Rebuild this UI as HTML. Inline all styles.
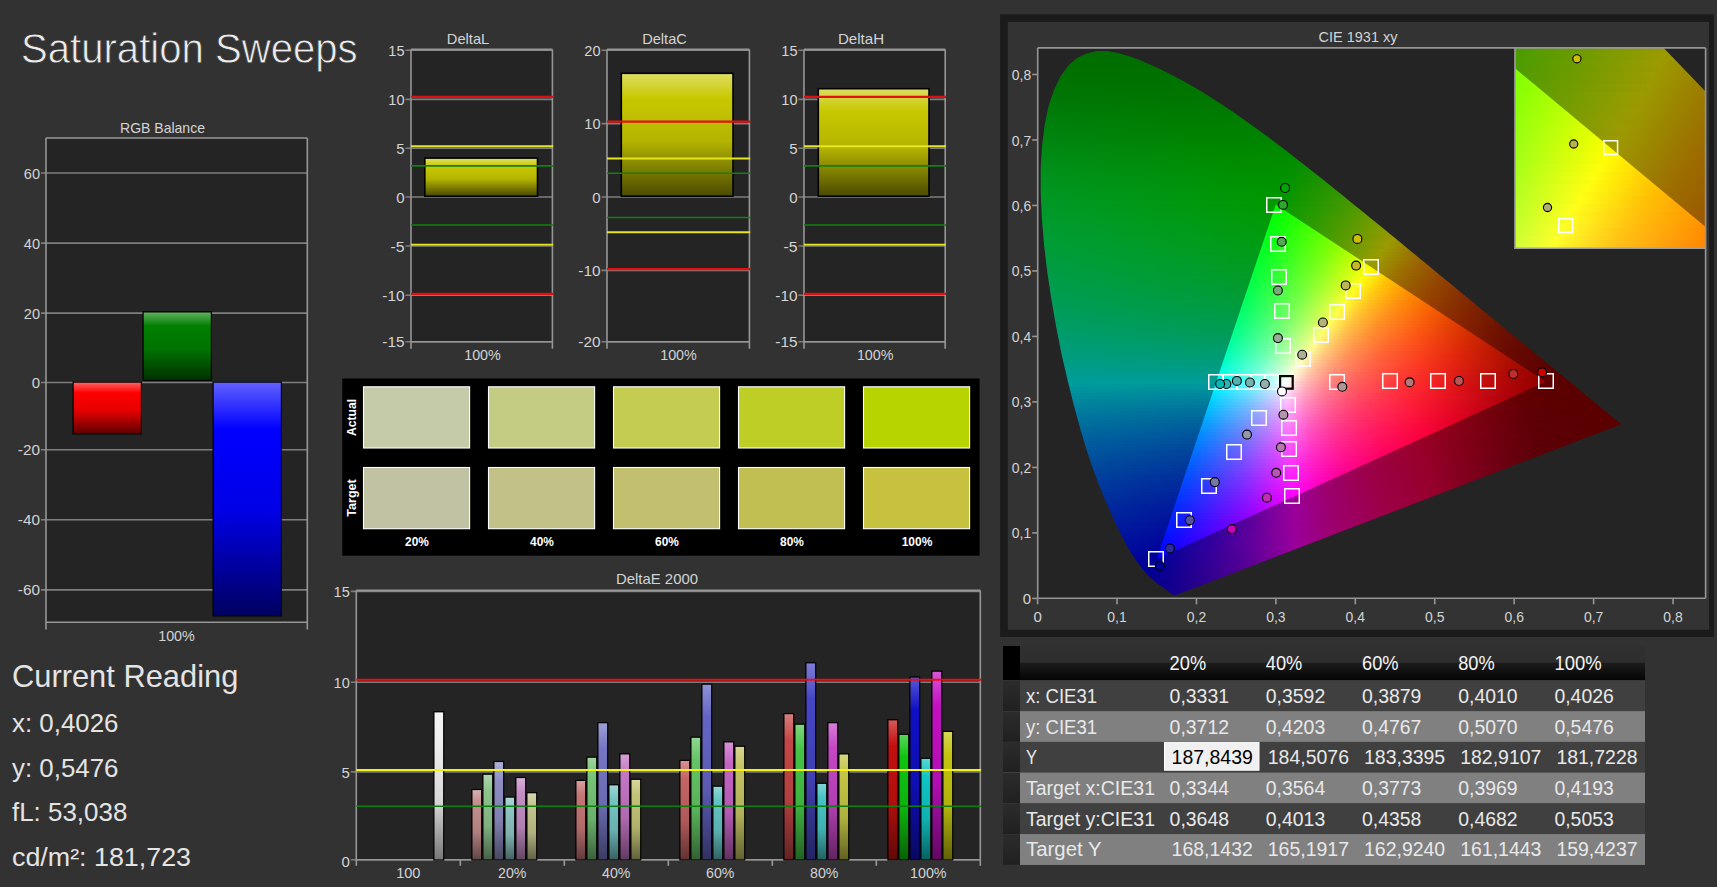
<!DOCTYPE html>
<html><head><meta charset="utf-8"><title>Saturation Sweeps</title>
<style>
html,body{margin:0;padding:0;background:#323232;width:1717px;height:887px;overflow:hidden}
svg{position:absolute;left:0;top:0}
text{font-family:"Liberation Sans", sans-serif}
.f{position:absolute}
.f>i{display:block;height:3px}
.g4>i{height:4px}
</style></head>
<body>
<svg width="1717" height="887" viewBox="0 0 1717 887">
<defs><linearGradient id="g1" x1="0" y1="0" x2="0" y2="1"><stop offset="0" stop-color="#ff6161"/><stop offset="0.2" stop-color="#ff0000"/><stop offset="0.55" stop-color="#e60000"/><stop offset="1" stop-color="#610000"/></linearGradient><linearGradient id="g2" x1="0" y1="0" x2="0" y2="1"><stop offset="0" stop-color="#61b061"/><stop offset="0.2" stop-color="#008000"/><stop offset="0.55" stop-color="#007300"/><stop offset="1" stop-color="#003100"/></linearGradient><linearGradient id="g3" x1="0" y1="0" x2="0" y2="1"><stop offset="0" stop-color="#6161ff"/><stop offset="0.2" stop-color="#0000ff"/><stop offset="0.55" stop-color="#0000e6"/><stop offset="1" stop-color="#000061"/></linearGradient><linearGradient id="g4" x1="0" y1="0" x2="0" y2="1"><stop offset="0" stop-color="#dddd61"/><stop offset="0.2" stop-color="#c8c800"/><stop offset="0.55" stop-color="#b4b400"/><stop offset="1" stop-color="#4c4c00"/></linearGradient><linearGradient id="g5" x1="0" y1="0" x2="0" y2="1"><stop offset="0" stop-color="#dddd61"/><stop offset="0.2" stop-color="#c8c800"/><stop offset="0.55" stop-color="#b4b400"/><stop offset="1" stop-color="#4c4c00"/></linearGradient><linearGradient id="g6" x1="0" y1="0" x2="0" y2="1"><stop offset="0" stop-color="#dddd61"/><stop offset="0.2" stop-color="#c8c800"/><stop offset="0.55" stop-color="#b4b400"/><stop offset="1" stop-color="#4c4c00"/></linearGradient><linearGradient id="g7" x1="0" y1="0" x2="0" y2="1"><stop offset="0" stop-color="#f4f4f4"/><stop offset="0.18" stop-color="#f0f0f0"/><stop offset="0.6" stop-color="#d8d8d8"/><stop offset="1" stop-color="#787878"/></linearGradient><linearGradient id="g8" x1="0" y1="0" x2="0" y2="1"><stop offset="0" stop-color="#d6b0b0"/><stop offset="0.18" stop-color="#c48e8e"/><stop offset="0.6" stop-color="#b08080"/><stop offset="1" stop-color="#624747"/></linearGradient><linearGradient id="g9" x1="0" y1="0" x2="0" y2="1"><stop offset="0" stop-color="#b0d6b0"/><stop offset="0.18" stop-color="#8ec48e"/><stop offset="0.6" stop-color="#80b080"/><stop offset="1" stop-color="#476247"/></linearGradient><linearGradient id="g10" x1="0" y1="0" x2="0" y2="1"><stop offset="0" stop-color="#b0b0d6"/><stop offset="0.18" stop-color="#8e8ec4"/><stop offset="0.6" stop-color="#8080b0"/><stop offset="1" stop-color="#474762"/></linearGradient><linearGradient id="g11" x1="0" y1="0" x2="0" y2="1"><stop offset="0" stop-color="#b0d6d6"/><stop offset="0.18" stop-color="#8ec4c4"/><stop offset="0.6" stop-color="#80b0b0"/><stop offset="1" stop-color="#476262"/></linearGradient><linearGradient id="g12" x1="0" y1="0" x2="0" y2="1"><stop offset="0" stop-color="#d6b0d6"/><stop offset="0.18" stop-color="#c48ec4"/><stop offset="0.6" stop-color="#b080b0"/><stop offset="1" stop-color="#624762"/></linearGradient><linearGradient id="g13" x1="0" y1="0" x2="0" y2="1"><stop offset="0" stop-color="#d6d6b0"/><stop offset="0.18" stop-color="#c4c48e"/><stop offset="0.6" stop-color="#b0b080"/><stop offset="1" stop-color="#626247"/></linearGradient><linearGradient id="g14" x1="0" y1="0" x2="0" y2="1"><stop offset="0" stop-color="#d69f9f"/><stop offset="0.18" stop-color="#c47676"/><stop offset="0.6" stop-color="#b06a6a"/><stop offset="1" stop-color="#623b3b"/></linearGradient><linearGradient id="g15" x1="0" y1="0" x2="0" y2="1"><stop offset="0" stop-color="#9fd69f"/><stop offset="0.18" stop-color="#76c476"/><stop offset="0.6" stop-color="#6ab06a"/><stop offset="1" stop-color="#3b623b"/></linearGradient><linearGradient id="g16" x1="0" y1="0" x2="0" y2="1"><stop offset="0" stop-color="#9f9fd6"/><stop offset="0.18" stop-color="#7676c4"/><stop offset="0.6" stop-color="#6a6ab0"/><stop offset="1" stop-color="#3b3b62"/></linearGradient><linearGradient id="g17" x1="0" y1="0" x2="0" y2="1"><stop offset="0" stop-color="#9fd6d6"/><stop offset="0.18" stop-color="#76c4c4"/><stop offset="0.6" stop-color="#6ab0b0"/><stop offset="1" stop-color="#3b6262"/></linearGradient><linearGradient id="g18" x1="0" y1="0" x2="0" y2="1"><stop offset="0" stop-color="#d69fd6"/><stop offset="0.18" stop-color="#c476c4"/><stop offset="0.6" stop-color="#b06ab0"/><stop offset="1" stop-color="#623b62"/></linearGradient><linearGradient id="g19" x1="0" y1="0" x2="0" y2="1"><stop offset="0" stop-color="#d6d69f"/><stop offset="0.18" stop-color="#c4c476"/><stop offset="0.6" stop-color="#b0b06a"/><stop offset="1" stop-color="#62623b"/></linearGradient><linearGradient id="g20" x1="0" y1="0" x2="0" y2="1"><stop offset="0" stop-color="#d69292"/><stop offset="0.18" stop-color="#c46464"/><stop offset="0.6" stop-color="#b05a5a"/><stop offset="1" stop-color="#623232"/></linearGradient><linearGradient id="g21" x1="0" y1="0" x2="0" y2="1"><stop offset="0" stop-color="#92d692"/><stop offset="0.18" stop-color="#64c464"/><stop offset="0.6" stop-color="#5ab05a"/><stop offset="1" stop-color="#326232"/></linearGradient><linearGradient id="g22" x1="0" y1="0" x2="0" y2="1"><stop offset="0" stop-color="#9292d6"/><stop offset="0.18" stop-color="#6464c4"/><stop offset="0.6" stop-color="#5a5ab0"/><stop offset="1" stop-color="#323262"/></linearGradient><linearGradient id="g23" x1="0" y1="0" x2="0" y2="1"><stop offset="0" stop-color="#92d6d6"/><stop offset="0.18" stop-color="#64c4c4"/><stop offset="0.6" stop-color="#5ab0b0"/><stop offset="1" stop-color="#326262"/></linearGradient><linearGradient id="g24" x1="0" y1="0" x2="0" y2="1"><stop offset="0" stop-color="#d692d6"/><stop offset="0.18" stop-color="#c464c4"/><stop offset="0.6" stop-color="#b05ab0"/><stop offset="1" stop-color="#623262"/></linearGradient><linearGradient id="g25" x1="0" y1="0" x2="0" y2="1"><stop offset="0" stop-color="#d6d692"/><stop offset="0.18" stop-color="#c4c464"/><stop offset="0.6" stop-color="#b0b05a"/><stop offset="1" stop-color="#626232"/></linearGradient><linearGradient id="g26" x1="0" y1="0" x2="0" y2="1"><stop offset="0" stop-color="#d67e7e"/><stop offset="0.18" stop-color="#c44646"/><stop offset="0.6" stop-color="#b03f3f"/><stop offset="1" stop-color="#622323"/></linearGradient><linearGradient id="g27" x1="0" y1="0" x2="0" y2="1"><stop offset="0" stop-color="#7ed67e"/><stop offset="0.18" stop-color="#46c446"/><stop offset="0.6" stop-color="#3fb03f"/><stop offset="1" stop-color="#236223"/></linearGradient><linearGradient id="g28" x1="0" y1="0" x2="0" y2="1"><stop offset="0" stop-color="#7e7ed6"/><stop offset="0.18" stop-color="#4646c4"/><stop offset="0.6" stop-color="#3f3fb0"/><stop offset="1" stop-color="#232362"/></linearGradient><linearGradient id="g29" x1="0" y1="0" x2="0" y2="1"><stop offset="0" stop-color="#7ed6d6"/><stop offset="0.18" stop-color="#46c4c4"/><stop offset="0.6" stop-color="#3fb0b0"/><stop offset="1" stop-color="#236262"/></linearGradient><linearGradient id="g30" x1="0" y1="0" x2="0" y2="1"><stop offset="0" stop-color="#d67ed6"/><stop offset="0.18" stop-color="#c446c4"/><stop offset="0.6" stop-color="#b03fb0"/><stop offset="1" stop-color="#622362"/></linearGradient><linearGradient id="g31" x1="0" y1="0" x2="0" y2="1"><stop offset="0" stop-color="#d6d67e"/><stop offset="0.18" stop-color="#c4c446"/><stop offset="0.6" stop-color="#b0b03f"/><stop offset="1" stop-color="#626223"/></linearGradient><linearGradient id="g32" x1="0" y1="0" x2="0" y2="1"><stop offset="0" stop-color="#d65757"/><stop offset="0.18" stop-color="#c40f0f"/><stop offset="0.6" stop-color="#b00e0e"/><stop offset="1" stop-color="#620808"/></linearGradient><linearGradient id="g33" x1="0" y1="0" x2="0" y2="1"><stop offset="0" stop-color="#57d657"/><stop offset="0.18" stop-color="#0fc40f"/><stop offset="0.6" stop-color="#0eb00e"/><stop offset="1" stop-color="#086208"/></linearGradient><linearGradient id="g34" x1="0" y1="0" x2="0" y2="1"><stop offset="0" stop-color="#5757d6"/><stop offset="0.18" stop-color="#0f0fc4"/><stop offset="0.6" stop-color="#0e0eb0"/><stop offset="1" stop-color="#080862"/></linearGradient><linearGradient id="g35" x1="0" y1="0" x2="0" y2="1"><stop offset="0" stop-color="#57d6d6"/><stop offset="0.18" stop-color="#0fc4c4"/><stop offset="0.6" stop-color="#0eb0b0"/><stop offset="1" stop-color="#086262"/></linearGradient><linearGradient id="g36" x1="0" y1="0" x2="0" y2="1"><stop offset="0" stop-color="#d657d6"/><stop offset="0.18" stop-color="#c40fc4"/><stop offset="0.6" stop-color="#b00eb0"/><stop offset="1" stop-color="#620862"/></linearGradient><linearGradient id="g37" x1="0" y1="0" x2="0" y2="1"><stop offset="0" stop-color="#d6d657"/><stop offset="0.18" stop-color="#c4c40f"/><stop offset="0.6" stop-color="#b0b00e"/><stop offset="1" stop-color="#626208"/></linearGradient><linearGradient id="g38" x1="0" y1="0" x2="0" y2="1"><stop offset="0" stop-color="#303030"/><stop offset="0.48" stop-color="#2e2e2e"/><stop offset="0.5" stop-color="#1c1c1c"/><stop offset="1" stop-color="#050505"/></linearGradient><linearGradient id="g39" x1="0" y1="0" x2="0" y2="1"><stop offset="0" stop-color="#2c2c2c"/><stop offset="1" stop-color="#202020"/></linearGradient><linearGradient id="g40" x1="0" y1="0" x2="0" y2="1"><stop offset="0" stop-color="#2c2c2c"/><stop offset="1" stop-color="#202020"/></linearGradient><linearGradient id="g41" x1="0" y1="0" x2="0" y2="1"><stop offset="0" stop-color="#2c2c2c"/><stop offset="1" stop-color="#202020"/></linearGradient><linearGradient id="g42" x1="0" y1="0" x2="0" y2="1"><stop offset="0" stop-color="#2c2c2c"/><stop offset="1" stop-color="#202020"/></linearGradient><linearGradient id="g43" x1="0" y1="0" x2="0" y2="1"><stop offset="0" stop-color="#2c2c2c"/><stop offset="1" stop-color="#202020"/></linearGradient><linearGradient id="g44" x1="0" y1="0" x2="0" y2="1"><stop offset="0" stop-color="#2c2c2c"/><stop offset="1" stop-color="#202020"/></linearGradient></defs>
<text x="21.0" y="63.2" font-size="43.4" fill="#ececec" textLength="336.6" lengthAdjust="spacingAndGlyphs" stroke="#323232" stroke-width="0.8">Saturation Sweeps</text>
<text x="12.0" y="687.0" font-size="30.5" fill="#e4e4e4" textLength="226.3" lengthAdjust="spacingAndGlyphs">Current Reading</text>
<text x="12.0" y="732.4" font-size="25.5" fill="#e4e4e4" textLength="106.5" lengthAdjust="spacingAndGlyphs">x: 0,4026</text>
<text x="12.0" y="776.9" font-size="25.5" fill="#e4e4e4" textLength="106.5" lengthAdjust="spacingAndGlyphs">y: 0,5476</text>
<text x="12.0" y="821.4" font-size="25.5" fill="#e4e4e4" textLength="115.3" lengthAdjust="spacingAndGlyphs">fL: 53,038</text>
<text x="12.0" y="865.9" font-size="25.5" fill="#e4e4e4" textLength="179.0" lengthAdjust="spacingAndGlyphs">cd/m²: 181,723</text>
<rect x="46.00" y="138.00" width="261.30" height="484.20" fill="#242424"/>
<line x1="41.00" y1="173.00" x2="307.30" y2="173.00" stroke="#7e7e7e" stroke-width="1.6"/>
<text x="40.0" y="178.5" font-size="15" text-anchor="end" fill="#d4d4d4" textLength="16.2" lengthAdjust="spacingAndGlyphs">60</text>
<line x1="41.00" y1="243.10" x2="307.30" y2="243.10" stroke="#7e7e7e" stroke-width="1.6"/>
<text x="40.0" y="248.6" font-size="15" text-anchor="end" fill="#d4d4d4" textLength="16.2" lengthAdjust="spacingAndGlyphs">40</text>
<line x1="41.00" y1="313.10" x2="307.30" y2="313.10" stroke="#7e7e7e" stroke-width="1.6"/>
<text x="40.0" y="318.6" font-size="15" text-anchor="end" fill="#d4d4d4" textLength="16.2" lengthAdjust="spacingAndGlyphs">20</text>
<line x1="41.00" y1="382.50" x2="307.30" y2="382.50" stroke="#7e7e7e" stroke-width="1.6"/>
<text x="40.0" y="388.0" font-size="15" text-anchor="end" fill="#d4d4d4">0</text>
<line x1="41.00" y1="449.80" x2="307.30" y2="449.80" stroke="#7e7e7e" stroke-width="1.6"/>
<text x="40.0" y="455.3" font-size="15" text-anchor="end" fill="#d4d4d4" textLength="22.2" lengthAdjust="spacingAndGlyphs">-20</text>
<line x1="41.00" y1="519.80" x2="307.30" y2="519.80" stroke="#7e7e7e" stroke-width="1.6"/>
<text x="40.0" y="525.3" font-size="15" text-anchor="end" fill="#d4d4d4" textLength="22.2" lengthAdjust="spacingAndGlyphs">-40</text>
<line x1="41.00" y1="589.90" x2="307.30" y2="589.90" stroke="#7e7e7e" stroke-width="1.6"/>
<text x="40.0" y="595.4" font-size="15" text-anchor="end" fill="#d4d4d4" textLength="22.2" lengthAdjust="spacingAndGlyphs">-60</text>
<line x1="46.00" y1="138.00" x2="307.30" y2="138.00" stroke="#969696" stroke-width="1.6"/>
<line x1="46.00" y1="138.00" x2="46.00" y2="629.60" stroke="#969696" stroke-width="1.6"/>
<line x1="307.30" y1="138.00" x2="307.30" y2="629.60" stroke="#969696" stroke-width="1.6"/>
<line x1="46.00" y1="622.20" x2="307.30" y2="622.20" stroke="#969696" stroke-width="1.6"/>
<text x="162.5" y="132.5" font-size="15" text-anchor="middle" fill="#d4d4d4" textLength="85.0" lengthAdjust="spacingAndGlyphs">RGB Balance</text>
<text x="176.5" y="641.0" font-size="15" text-anchor="middle" fill="#d4d4d4" textLength="36.6" lengthAdjust="spacingAndGlyphs">100%</text>
<rect x="72.50" y="381.50" width="69.50" height="53.00" fill="#000"/>
<rect x="73.70" y="382.70" width="67.10" height="50.60" fill="url(#g1)"/>
<rect x="142.50" y="311.30" width="69.50" height="69.70" fill="#000"/>
<rect x="143.70" y="312.50" width="67.10" height="67.30" fill="url(#g2)"/>
<rect x="212.50" y="381.50" width="69.50" height="235.00" fill="#000"/>
<rect x="213.70" y="382.70" width="67.10" height="232.60" fill="url(#g3)"/>
<rect x="411.00" y="49.50" width="141.40" height="292.30" fill="#242424"/>
<line x1="405.50" y1="50.20" x2="552.40" y2="50.20" stroke="#7e7e7e" stroke-width="1.6"/>
<text x="404.5" y="55.7" font-size="15" text-anchor="end" fill="#d4d4d4" textLength="16.2" lengthAdjust="spacingAndGlyphs">15</text>
<line x1="405.50" y1="99.40" x2="552.40" y2="99.40" stroke="#7e7e7e" stroke-width="1.6"/>
<text x="404.5" y="104.9" font-size="15" text-anchor="end" fill="#d4d4d4" textLength="16.2" lengthAdjust="spacingAndGlyphs">10</text>
<line x1="405.50" y1="148.20" x2="552.40" y2="148.20" stroke="#7e7e7e" stroke-width="1.6"/>
<text x="404.5" y="153.7" font-size="15" text-anchor="end" fill="#d4d4d4">5</text>
<line x1="405.50" y1="197.00" x2="552.40" y2="197.00" stroke="#7e7e7e" stroke-width="1.6"/>
<text x="404.5" y="202.5" font-size="15" text-anchor="end" fill="#d4d4d4">0</text>
<line x1="405.50" y1="246.00" x2="552.40" y2="246.00" stroke="#7e7e7e" stroke-width="1.6"/>
<text x="404.5" y="251.5" font-size="15" text-anchor="end" fill="#d4d4d4" textLength="14.1" lengthAdjust="spacingAndGlyphs">-5</text>
<line x1="405.50" y1="295.20" x2="552.40" y2="295.20" stroke="#7e7e7e" stroke-width="1.6"/>
<text x="404.5" y="300.7" font-size="15" text-anchor="end" fill="#d4d4d4" textLength="22.2" lengthAdjust="spacingAndGlyphs">-10</text>
<line x1="405.50" y1="341.80" x2="552.40" y2="341.80" stroke="#7e7e7e" stroke-width="1.6"/>
<text x="404.5" y="347.3" font-size="15" text-anchor="end" fill="#d4d4d4" textLength="22.2" lengthAdjust="spacingAndGlyphs">-15</text>
<line x1="411.00" y1="49.50" x2="552.40" y2="49.50" stroke="#969696" stroke-width="2"/>
<line x1="411.00" y1="49.50" x2="411.00" y2="348.80" stroke="#969696" stroke-width="1.6"/>
<line x1="552.40" y1="49.50" x2="552.40" y2="348.80" stroke="#969696" stroke-width="1.6"/>
<line x1="411.00" y1="341.80" x2="552.40" y2="341.80" stroke="#969696" stroke-width="1.6"/>
<rect x="424.00" y="157.30" width="114.30" height="39.70" fill="#000"/>
<rect x="425.60" y="158.90" width="111.10" height="36.50" fill="url(#g4)"/>
<line x1="411.00" y1="96.95" x2="553.20" y2="96.95" stroke="#e01010" stroke-width="2.3"/>
<line x1="411.00" y1="146.18" x2="553.20" y2="146.18" stroke="#e6e620" stroke-width="1.9"/>
<line x1="411.00" y1="165.87" x2="553.20" y2="165.87" stroke="#108010" stroke-width="1.6"/>
<line x1="411.00" y1="224.94" x2="553.20" y2="224.94" stroke="#108010" stroke-width="1.6"/>
<line x1="411.00" y1="244.62" x2="553.20" y2="244.62" stroke="#e6e620" stroke-width="1.9"/>
<line x1="411.00" y1="293.85" x2="553.20" y2="293.85" stroke="#e01010" stroke-width="2.3"/>
<text x="468.0" y="43.8" font-size="15" text-anchor="middle" fill="#d4d4d4" textLength="42.4" lengthAdjust="spacingAndGlyphs">DeltaL</text>
<text x="482.5" y="360.0" font-size="15" text-anchor="middle" fill="#d4d4d4" textLength="36.6" lengthAdjust="spacingAndGlyphs">100%</text>
<rect x="607.00" y="49.50" width="142.40" height="292.30" fill="#242424"/>
<line x1="601.50" y1="50.20" x2="749.40" y2="50.20" stroke="#7e7e7e" stroke-width="1.6"/>
<text x="600.5" y="55.7" font-size="15" text-anchor="end" fill="#d4d4d4" textLength="16.2" lengthAdjust="spacingAndGlyphs">20</text>
<line x1="601.50" y1="123.60" x2="749.40" y2="123.60" stroke="#7e7e7e" stroke-width="1.6"/>
<text x="600.5" y="129.1" font-size="15" text-anchor="end" fill="#d4d4d4" textLength="16.2" lengthAdjust="spacingAndGlyphs">10</text>
<line x1="601.50" y1="197.00" x2="749.40" y2="197.00" stroke="#7e7e7e" stroke-width="1.6"/>
<text x="600.5" y="202.5" font-size="15" text-anchor="end" fill="#d4d4d4">0</text>
<line x1="601.50" y1="270.40" x2="749.40" y2="270.40" stroke="#7e7e7e" stroke-width="1.6"/>
<text x="600.5" y="275.9" font-size="15" text-anchor="end" fill="#d4d4d4" textLength="22.2" lengthAdjust="spacingAndGlyphs">-10</text>
<line x1="601.50" y1="341.80" x2="749.40" y2="341.80" stroke="#7e7e7e" stroke-width="1.6"/>
<text x="600.5" y="347.3" font-size="15" text-anchor="end" fill="#d4d4d4" textLength="22.2" lengthAdjust="spacingAndGlyphs">-20</text>
<line x1="607.00" y1="49.50" x2="749.40" y2="49.50" stroke="#969696" stroke-width="2"/>
<line x1="607.00" y1="49.50" x2="607.00" y2="348.80" stroke="#969696" stroke-width="1.6"/>
<line x1="749.40" y1="49.50" x2="749.40" y2="348.80" stroke="#969696" stroke-width="1.6"/>
<line x1="607.00" y1="341.80" x2="749.40" y2="341.80" stroke="#969696" stroke-width="1.6"/>
<rect x="620.50" y="72.50" width="113.30" height="124.50" fill="#000"/>
<rect x="622.10" y="74.10" width="110.10" height="121.30" fill="url(#g5)"/>
<line x1="607.00" y1="121.70" x2="750.20" y2="121.70" stroke="#e01010" stroke-width="2.3"/>
<line x1="607.00" y1="158.55" x2="750.20" y2="158.55" stroke="#e6e620" stroke-width="1.9"/>
<line x1="607.00" y1="173.29" x2="750.20" y2="173.29" stroke="#108010" stroke-width="1.6"/>
<line x1="607.00" y1="217.51" x2="750.20" y2="217.51" stroke="#108010" stroke-width="1.6"/>
<line x1="607.00" y1="232.25" x2="750.20" y2="232.25" stroke="#e6e620" stroke-width="1.9"/>
<line x1="607.00" y1="269.10" x2="750.20" y2="269.10" stroke="#e01010" stroke-width="2.3"/>
<text x="664.5" y="43.8" font-size="15" text-anchor="middle" fill="#d4d4d4" textLength="44.6" lengthAdjust="spacingAndGlyphs">DeltaC</text>
<text x="678.5" y="360.0" font-size="15" text-anchor="middle" fill="#d4d4d4" textLength="36.6" lengthAdjust="spacingAndGlyphs">100%</text>
<rect x="804.00" y="49.50" width="141.20" height="292.30" fill="#242424"/>
<line x1="798.50" y1="50.20" x2="945.20" y2="50.20" stroke="#7e7e7e" stroke-width="1.6"/>
<text x="797.5" y="55.7" font-size="15" text-anchor="end" fill="#d4d4d4" textLength="16.2" lengthAdjust="spacingAndGlyphs">15</text>
<line x1="798.50" y1="99.40" x2="945.20" y2="99.40" stroke="#7e7e7e" stroke-width="1.6"/>
<text x="797.5" y="104.9" font-size="15" text-anchor="end" fill="#d4d4d4" textLength="16.2" lengthAdjust="spacingAndGlyphs">10</text>
<line x1="798.50" y1="148.20" x2="945.20" y2="148.20" stroke="#7e7e7e" stroke-width="1.6"/>
<text x="797.5" y="153.7" font-size="15" text-anchor="end" fill="#d4d4d4">5</text>
<line x1="798.50" y1="197.00" x2="945.20" y2="197.00" stroke="#7e7e7e" stroke-width="1.6"/>
<text x="797.5" y="202.5" font-size="15" text-anchor="end" fill="#d4d4d4">0</text>
<line x1="798.50" y1="246.00" x2="945.20" y2="246.00" stroke="#7e7e7e" stroke-width="1.6"/>
<text x="797.5" y="251.5" font-size="15" text-anchor="end" fill="#d4d4d4" textLength="14.1" lengthAdjust="spacingAndGlyphs">-5</text>
<line x1="798.50" y1="295.20" x2="945.20" y2="295.20" stroke="#7e7e7e" stroke-width="1.6"/>
<text x="797.5" y="300.7" font-size="15" text-anchor="end" fill="#d4d4d4" textLength="22.2" lengthAdjust="spacingAndGlyphs">-10</text>
<line x1="798.50" y1="341.80" x2="945.20" y2="341.80" stroke="#7e7e7e" stroke-width="1.6"/>
<text x="797.5" y="347.3" font-size="15" text-anchor="end" fill="#d4d4d4" textLength="22.2" lengthAdjust="spacingAndGlyphs">-15</text>
<line x1="804.00" y1="49.50" x2="945.20" y2="49.50" stroke="#969696" stroke-width="2"/>
<line x1="804.00" y1="49.50" x2="804.00" y2="348.80" stroke="#969696" stroke-width="1.6"/>
<line x1="945.20" y1="49.50" x2="945.20" y2="348.80" stroke="#969696" stroke-width="1.6"/>
<line x1="804.00" y1="341.80" x2="945.20" y2="341.80" stroke="#969696" stroke-width="1.6"/>
<rect x="817.50" y="87.90" width="112.30" height="109.10" fill="#000"/>
<rect x="819.10" y="89.50" width="109.10" height="105.90" fill="url(#g6)"/>
<line x1="804.00" y1="96.95" x2="946.00" y2="96.95" stroke="#e01010" stroke-width="2.3"/>
<line x1="804.00" y1="146.18" x2="946.00" y2="146.18" stroke="#e6e620" stroke-width="1.9"/>
<line x1="804.00" y1="165.87" x2="946.00" y2="165.87" stroke="#108010" stroke-width="1.6"/>
<line x1="804.00" y1="224.94" x2="946.00" y2="224.94" stroke="#108010" stroke-width="1.6"/>
<line x1="804.00" y1="244.62" x2="946.00" y2="244.62" stroke="#e6e620" stroke-width="1.9"/>
<line x1="804.00" y1="293.85" x2="946.00" y2="293.85" stroke="#e01010" stroke-width="2.3"/>
<text x="861.0" y="43.8" font-size="15" text-anchor="middle" fill="#d4d4d4" textLength="46.2" lengthAdjust="spacingAndGlyphs">DeltaH</text>
<text x="875.2" y="360.0" font-size="15" text-anchor="middle" fill="#d4d4d4" textLength="36.6" lengthAdjust="spacingAndGlyphs">100%</text>
<rect x="342.30" y="378.50" width="637.30" height="177.20" fill="#000"/>
<rect x="363.50" y="386.80" width="106.10" height="61.20" fill="#c5cba8" stroke="#ffffff" stroke-width="1.1"/>
<rect x="363.50" y="467.50" width="106.10" height="61.20" fill="#c1c1a3" stroke="#ffffff" stroke-width="1.1"/>
<text x="417.0" y="546.0" font-size="13" text-anchor="middle" fill="#fff" textLength="23.8" lengthAdjust="spacingAndGlyphs" font-weight="bold">20%</text>
<rect x="488.50" y="386.80" width="106.10" height="61.20" fill="#c4cc83" stroke="#ffffff" stroke-width="1.1"/>
<rect x="488.50" y="467.50" width="106.10" height="61.20" fill="#c2c187" stroke="#ffffff" stroke-width="1.1"/>
<text x="542.0" y="546.0" font-size="13" text-anchor="middle" fill="#fff" textLength="23.8" lengthAdjust="spacingAndGlyphs" font-weight="bold">40%</text>
<rect x="613.50" y="386.80" width="106.10" height="61.20" fill="#c4cd52" stroke="#ffffff" stroke-width="1.1"/>
<rect x="613.50" y="467.50" width="106.10" height="61.20" fill="#c2c06e" stroke="#ffffff" stroke-width="1.1"/>
<text x="667.0" y="546.0" font-size="13" text-anchor="middle" fill="#fff" textLength="23.8" lengthAdjust="spacingAndGlyphs" font-weight="bold">60%</text>
<rect x="738.50" y="386.80" width="106.10" height="61.20" fill="#bfce26" stroke="#ffffff" stroke-width="1.1"/>
<rect x="738.50" y="467.50" width="106.10" height="61.20" fill="#c2bf52" stroke="#ffffff" stroke-width="1.1"/>
<text x="792.0" y="546.0" font-size="13" text-anchor="middle" fill="#fff" textLength="23.8" lengthAdjust="spacingAndGlyphs" font-weight="bold">80%</text>
<rect x="863.50" y="386.80" width="106.10" height="61.20" fill="#b8d400" stroke="#ffffff" stroke-width="1.1"/>
<rect x="863.50" y="467.50" width="106.10" height="61.20" fill="#c7c140" stroke="#ffffff" stroke-width="1.1"/>
<text x="917.0" y="546.0" font-size="13" text-anchor="middle" fill="#fff" textLength="30.7" lengthAdjust="spacingAndGlyphs" font-weight="bold">100%</text>
<text x="355.5" y="417.5" font-size="13" text-anchor="middle" fill="#fff" textLength="37.2" lengthAdjust="spacingAndGlyphs" font-weight="bold" transform="rotate(-90 355.5 417.5)">Actual</text>
<text x="355.5" y="498.0" font-size="13" text-anchor="middle" fill="#fff" textLength="37.4" lengthAdjust="spacingAndGlyphs" font-weight="bold" transform="rotate(-90 355.5 498.0)">Target</text>
<rect x="356.30" y="590.60" width="624.00" height="269.20" fill="#242424"/>
<line x1="350.80" y1="591.40" x2="980.30" y2="591.40" stroke="#7e7e7e" stroke-width="1.6"/>
<text x="349.8" y="597.1" font-size="15" text-anchor="end" fill="#d4d4d4" textLength="16.2" lengthAdjust="spacingAndGlyphs">15</text>
<line x1="350.80" y1="682.20" x2="980.30" y2="682.20" stroke="#7e7e7e" stroke-width="1.6"/>
<text x="349.8" y="687.9" font-size="15" text-anchor="end" fill="#d4d4d4" textLength="16.2" lengthAdjust="spacingAndGlyphs">10</text>
<line x1="350.80" y1="771.90" x2="980.30" y2="771.90" stroke="#7e7e7e" stroke-width="1.6"/>
<text x="349.8" y="777.6" font-size="15" text-anchor="end" fill="#d4d4d4">5</text>
<line x1="350.80" y1="859.80" x2="980.30" y2="859.80" stroke="#7e7e7e" stroke-width="1.6"/>
<text x="349.8" y="866.7" font-size="15" text-anchor="end" fill="#d4d4d4">0</text>
<line x1="356.30" y1="590.60" x2="980.30" y2="590.60" stroke="#969696" stroke-width="2"/>
<line x1="356.30" y1="590.60" x2="356.30" y2="859.80" stroke="#969696" stroke-width="1.6"/>
<line x1="980.30" y1="590.60" x2="980.30" y2="859.80" stroke="#969696" stroke-width="1.6"/>
<line x1="356.30" y1="859.80" x2="980.30" y2="859.80" stroke="#969696" stroke-width="1.6"/>
<text x="657.0" y="583.5" font-size="15" text-anchor="middle" fill="#d4d4d4" textLength="82.0" lengthAdjust="spacingAndGlyphs">DeltaE 2000</text>
<line x1="356.30" y1="859.80" x2="356.30" y2="865.80" stroke="#969696" stroke-width="1.6"/>
<text x="408.3" y="877.5" font-size="15" text-anchor="middle" fill="#d4d4d4" textLength="24.3" lengthAdjust="spacingAndGlyphs">100</text>
<line x1="460.30" y1="859.80" x2="460.30" y2="865.80" stroke="#969696" stroke-width="1.6"/>
<text x="512.3" y="877.5" font-size="15" text-anchor="middle" fill="#d4d4d4" textLength="28.4" lengthAdjust="spacingAndGlyphs">20%</text>
<line x1="564.30" y1="859.80" x2="564.30" y2="865.80" stroke="#969696" stroke-width="1.6"/>
<text x="616.3" y="877.5" font-size="15" text-anchor="middle" fill="#d4d4d4" textLength="28.4" lengthAdjust="spacingAndGlyphs">40%</text>
<line x1="668.30" y1="859.80" x2="668.30" y2="865.80" stroke="#969696" stroke-width="1.6"/>
<text x="720.3" y="877.5" font-size="15" text-anchor="middle" fill="#d4d4d4" textLength="28.4" lengthAdjust="spacingAndGlyphs">60%</text>
<line x1="772.30" y1="859.80" x2="772.30" y2="865.80" stroke="#969696" stroke-width="1.6"/>
<text x="824.3" y="877.5" font-size="15" text-anchor="middle" fill="#d4d4d4" textLength="28.4" lengthAdjust="spacingAndGlyphs">80%</text>
<line x1="876.30" y1="859.80" x2="876.30" y2="865.80" stroke="#969696" stroke-width="1.6"/>
<text x="928.3" y="877.5" font-size="15" text-anchor="middle" fill="#d4d4d4" textLength="36.5" lengthAdjust="spacingAndGlyphs">100%</text>
<line x1="980.30" y1="859.80" x2="980.30" y2="865.80" stroke="#969696" stroke-width="1.6"/>
<rect x="433.30" y="711.20" width="11.00" height="149.40" fill="#000"/>
<rect x="434.50" y="712.40" width="8.60" height="147.00" fill="url(#g7)"/>
<rect x="471.30" y="788.90" width="11.00" height="71.70" fill="#000"/>
<rect x="472.50" y="790.10" width="8.60" height="69.30" fill="url(#g8)"/>
<rect x="482.30" y="773.60" width="11.00" height="87.00" fill="#000"/>
<rect x="483.50" y="774.80" width="8.60" height="84.60" fill="url(#g9)"/>
<rect x="493.30" y="760.90" width="11.00" height="99.70" fill="#000"/>
<rect x="494.50" y="762.10" width="8.60" height="97.30" fill="url(#g10)"/>
<rect x="504.30" y="796.50" width="11.00" height="64.10" fill="#000"/>
<rect x="505.50" y="797.70" width="8.60" height="61.70" fill="url(#g11)"/>
<rect x="515.30" y="776.90" width="11.00" height="83.70" fill="#000"/>
<rect x="516.50" y="778.10" width="8.60" height="81.30" fill="url(#g12)"/>
<rect x="526.30" y="792.10" width="11.00" height="68.50" fill="#000"/>
<rect x="527.50" y="793.30" width="8.60" height="66.10" fill="url(#g13)"/>
<rect x="575.30" y="779.80" width="11.00" height="80.80" fill="#000"/>
<rect x="576.50" y="781.00" width="8.60" height="78.40" fill="url(#g14)"/>
<rect x="586.30" y="756.60" width="11.00" height="104.00" fill="#000"/>
<rect x="587.50" y="757.80" width="8.60" height="101.60" fill="url(#g15)"/>
<rect x="597.30" y="722.10" width="11.00" height="138.50" fill="#000"/>
<rect x="598.50" y="723.30" width="8.60" height="136.10" fill="url(#g16)"/>
<rect x="608.30" y="784.20" width="11.00" height="76.40" fill="#000"/>
<rect x="609.50" y="785.40" width="8.60" height="74.00" fill="url(#g17)"/>
<rect x="619.30" y="753.30" width="11.00" height="107.30" fill="#000"/>
<rect x="620.50" y="754.50" width="8.60" height="104.90" fill="url(#g18)"/>
<rect x="630.30" y="778.70" width="11.00" height="81.90" fill="#000"/>
<rect x="631.50" y="779.90" width="8.60" height="79.50" fill="url(#g19)"/>
<rect x="679.30" y="759.80" width="11.00" height="100.80" fill="#000"/>
<rect x="680.50" y="761.00" width="8.60" height="98.40" fill="url(#g20)"/>
<rect x="690.30" y="736.60" width="11.00" height="124.00" fill="#000"/>
<rect x="691.50" y="737.80" width="8.60" height="121.60" fill="url(#g21)"/>
<rect x="701.30" y="683.60" width="11.00" height="177.00" fill="#000"/>
<rect x="702.50" y="684.80" width="8.60" height="174.60" fill="url(#g22)"/>
<rect x="712.30" y="785.60" width="11.00" height="75.00" fill="#000"/>
<rect x="713.50" y="786.80" width="8.60" height="72.60" fill="url(#g23)"/>
<rect x="723.30" y="741.30" width="11.00" height="119.30" fill="#000"/>
<rect x="724.50" y="742.50" width="8.60" height="116.90" fill="url(#g24)"/>
<rect x="734.30" y="745.70" width="11.00" height="114.90" fill="#000"/>
<rect x="735.50" y="746.90" width="8.60" height="112.50" fill="url(#g25)"/>
<rect x="783.30" y="713.00" width="11.00" height="147.60" fill="#000"/>
<rect x="784.50" y="714.20" width="8.60" height="145.20" fill="url(#g26)"/>
<rect x="794.30" y="723.60" width="11.00" height="137.00" fill="#000"/>
<rect x="795.50" y="724.80" width="8.60" height="134.60" fill="url(#g27)"/>
<rect x="805.30" y="662.20" width="11.00" height="198.40" fill="#000"/>
<rect x="806.50" y="663.40" width="8.60" height="196.00" fill="url(#g28)"/>
<rect x="816.30" y="782.70" width="11.00" height="77.90" fill="#000"/>
<rect x="817.50" y="783.90" width="8.60" height="75.50" fill="url(#g29)"/>
<rect x="827.30" y="722.10" width="11.00" height="138.50" fill="#000"/>
<rect x="828.50" y="723.30" width="8.60" height="136.10" fill="url(#g30)"/>
<rect x="838.30" y="753.30" width="11.00" height="107.30" fill="#000"/>
<rect x="839.50" y="754.50" width="8.60" height="104.90" fill="url(#g31)"/>
<rect x="887.30" y="719.20" width="11.00" height="141.40" fill="#000"/>
<rect x="888.50" y="720.40" width="8.60" height="139.00" fill="url(#g32)"/>
<rect x="898.30" y="733.70" width="11.00" height="126.90" fill="#000"/>
<rect x="899.50" y="734.90" width="8.60" height="124.50" fill="url(#g33)"/>
<rect x="909.30" y="676.40" width="11.00" height="184.20" fill="#000"/>
<rect x="910.50" y="677.60" width="8.60" height="181.80" fill="url(#g34)"/>
<rect x="920.30" y="757.70" width="11.00" height="102.90" fill="#000"/>
<rect x="921.50" y="758.90" width="8.60" height="100.50" fill="url(#g35)"/>
<rect x="931.30" y="670.60" width="11.00" height="190.00" fill="#000"/>
<rect x="932.50" y="671.80" width="8.60" height="187.60" fill="url(#g36)"/>
<rect x="942.30" y="730.80" width="11.00" height="129.80" fill="#000"/>
<rect x="943.50" y="732.00" width="8.60" height="127.40" fill="url(#g37)"/>
<line x1="356.30" y1="679.70" x2="981.10" y2="679.70" stroke="#e81010" stroke-width="2.1"/>
<line x1="356.30" y1="770.00" x2="981.10" y2="770.00" stroke="#f4f410" stroke-width="1.8"/>
<line x1="356.30" y1="806.30" x2="981.10" y2="806.30" stroke="#0c800c" stroke-width="1.6"/>
<rect x="1000.10" y="14.30" width="713.80" height="622.70" fill="#1b1b1b"/>
<rect x="1007.80" y="22.00" width="701.20" height="607.80" fill="#333333"/>
<rect x="1037.70" y="47.90" width="667.90" height="550.40" fill="#242424"/>
<text x="1358.0" y="42.0" font-size="15" text-anchor="middle" fill="#d4d4d4" textLength="79.0" lengthAdjust="spacingAndGlyphs">CIE 1931 xy</text>
<line x1="1037.60" y1="598.30" x2="1037.60" y2="604.30" stroke="#969696" stroke-width="1.6"/>
<text x="1037.6" y="622.0" font-size="15" text-anchor="middle" fill="#d4d4d4">0</text>
<line x1="1032.20" y1="598.40" x2="1037.70" y2="598.40" stroke="#969696" stroke-width="1.6"/>
<text x="1031.2" y="603.9" font-size="15" text-anchor="end" fill="#d4d4d4">0</text>
<line x1="1117.03" y1="598.30" x2="1117.03" y2="604.30" stroke="#969696" stroke-width="1.6"/>
<text x="1117.0" y="622.0" font-size="15" text-anchor="middle" fill="#d4d4d4" textLength="19.4" lengthAdjust="spacingAndGlyphs">0,1</text>
<line x1="1032.20" y1="532.91" x2="1037.70" y2="532.91" stroke="#969696" stroke-width="1.6"/>
<text x="1031.2" y="538.4" font-size="15" text-anchor="end" fill="#d4d4d4" textLength="19.4" lengthAdjust="spacingAndGlyphs">0,1</text>
<line x1="1196.46" y1="598.30" x2="1196.46" y2="604.30" stroke="#969696" stroke-width="1.6"/>
<text x="1196.5" y="622.0" font-size="15" text-anchor="middle" fill="#d4d4d4" textLength="19.4" lengthAdjust="spacingAndGlyphs">0,2</text>
<line x1="1032.20" y1="467.42" x2="1037.70" y2="467.42" stroke="#969696" stroke-width="1.6"/>
<text x="1031.2" y="472.9" font-size="15" text-anchor="end" fill="#d4d4d4" textLength="19.4" lengthAdjust="spacingAndGlyphs">0,2</text>
<line x1="1275.89" y1="598.30" x2="1275.89" y2="604.30" stroke="#969696" stroke-width="1.6"/>
<text x="1275.9" y="622.0" font-size="15" text-anchor="middle" fill="#d4d4d4" textLength="19.4" lengthAdjust="spacingAndGlyphs">0,3</text>
<line x1="1032.20" y1="401.93" x2="1037.70" y2="401.93" stroke="#969696" stroke-width="1.6"/>
<text x="1031.2" y="407.4" font-size="15" text-anchor="end" fill="#d4d4d4" textLength="19.4" lengthAdjust="spacingAndGlyphs">0,3</text>
<line x1="1355.32" y1="598.30" x2="1355.32" y2="604.30" stroke="#969696" stroke-width="1.6"/>
<text x="1355.3" y="622.0" font-size="15" text-anchor="middle" fill="#d4d4d4" textLength="19.4" lengthAdjust="spacingAndGlyphs">0,4</text>
<line x1="1032.20" y1="336.44" x2="1037.70" y2="336.44" stroke="#969696" stroke-width="1.6"/>
<text x="1031.2" y="341.9" font-size="15" text-anchor="end" fill="#d4d4d4" textLength="19.4" lengthAdjust="spacingAndGlyphs">0,4</text>
<line x1="1434.75" y1="598.30" x2="1434.75" y2="604.30" stroke="#969696" stroke-width="1.6"/>
<text x="1434.8" y="622.0" font-size="15" text-anchor="middle" fill="#d4d4d4" textLength="19.4" lengthAdjust="spacingAndGlyphs">0,5</text>
<line x1="1032.20" y1="270.95" x2="1037.70" y2="270.95" stroke="#969696" stroke-width="1.6"/>
<text x="1031.2" y="276.4" font-size="15" text-anchor="end" fill="#d4d4d4" textLength="19.4" lengthAdjust="spacingAndGlyphs">0,5</text>
<line x1="1514.18" y1="598.30" x2="1514.18" y2="604.30" stroke="#969696" stroke-width="1.6"/>
<text x="1514.2" y="622.0" font-size="15" text-anchor="middle" fill="#d4d4d4" textLength="19.4" lengthAdjust="spacingAndGlyphs">0,6</text>
<line x1="1032.20" y1="205.46" x2="1037.70" y2="205.46" stroke="#969696" stroke-width="1.6"/>
<text x="1031.2" y="211.0" font-size="15" text-anchor="end" fill="#d4d4d4" textLength="19.4" lengthAdjust="spacingAndGlyphs">0,6</text>
<line x1="1593.61" y1="598.30" x2="1593.61" y2="604.30" stroke="#969696" stroke-width="1.6"/>
<text x="1593.6" y="622.0" font-size="15" text-anchor="middle" fill="#d4d4d4" textLength="19.4" lengthAdjust="spacingAndGlyphs">0,7</text>
<line x1="1032.20" y1="139.97" x2="1037.70" y2="139.97" stroke="#969696" stroke-width="1.6"/>
<text x="1031.2" y="145.5" font-size="15" text-anchor="end" fill="#d4d4d4" textLength="19.4" lengthAdjust="spacingAndGlyphs">0,7</text>
<line x1="1673.04" y1="598.30" x2="1673.04" y2="604.30" stroke="#969696" stroke-width="1.6"/>
<text x="1673.0" y="622.0" font-size="15" text-anchor="middle" fill="#d4d4d4" textLength="19.4" lengthAdjust="spacingAndGlyphs">0,8</text>
<line x1="1032.20" y1="74.48" x2="1037.70" y2="74.48" stroke="#969696" stroke-width="1.6"/>
<text x="1031.2" y="80.0" font-size="15" text-anchor="end" fill="#d4d4d4" textLength="19.4" lengthAdjust="spacingAndGlyphs">0,8</text>
<rect x="1003.00" y="646.00" width="642.00" height="34.00" fill="url(#g38)"/>
<rect x="1003.00" y="646.00" width="17.00" height="34.00" fill="#000"/>
<text x="1169.6" y="670.0" font-size="20" fill="#f4f4f4" textLength="36.5" lengthAdjust="spacingAndGlyphs">20%</text>
<text x="1265.8" y="670.0" font-size="20" fill="#f4f4f4" textLength="36.5" lengthAdjust="spacingAndGlyphs">40%</text>
<text x="1362.0" y="670.0" font-size="20" fill="#f4f4f4" textLength="36.5" lengthAdjust="spacingAndGlyphs">60%</text>
<text x="1458.2" y="670.0" font-size="20" fill="#f4f4f4" textLength="36.5" lengthAdjust="spacingAndGlyphs">80%</text>
<text x="1554.4" y="670.0" font-size="20" fill="#f4f4f4" textLength="47.3" lengthAdjust="spacingAndGlyphs">100%</text>
<rect x="1003.00" y="680.40" width="642.00" height="30.90" fill="#404040"/>
<rect x="1003.00" y="680.40" width="17.00" height="30.90" fill="url(#g39)"/>
<text x="1026.0" y="702.8" font-size="20" fill="#e8e8e8" textLength="71.0" lengthAdjust="spacingAndGlyphs">x: CIE31</text>
<text x="1169.6" y="702.8" font-size="20" fill="#e8e8e8" textLength="59.4" lengthAdjust="spacingAndGlyphs">0,3331</text>
<text x="1265.8" y="702.8" font-size="20" fill="#e8e8e8" textLength="59.4" lengthAdjust="spacingAndGlyphs">0,3592</text>
<text x="1362.0" y="702.8" font-size="20" fill="#e8e8e8" textLength="59.4" lengthAdjust="spacingAndGlyphs">0,3879</text>
<text x="1458.2" y="702.8" font-size="20" fill="#e8e8e8" textLength="59.4" lengthAdjust="spacingAndGlyphs">0,4010</text>
<text x="1554.4" y="702.8" font-size="20" fill="#e8e8e8" textLength="59.4" lengthAdjust="spacingAndGlyphs">0,4026</text>
<rect x="1003.00" y="711.13" width="642.00" height="30.90" fill="#808080"/>
<rect x="1003.00" y="711.13" width="17.00" height="30.90" fill="url(#g40)"/>
<text x="1026.0" y="733.5" font-size="20" fill="#e8e8e8" textLength="71.0" lengthAdjust="spacingAndGlyphs">y: CIE31</text>
<text x="1169.6" y="733.5" font-size="20" fill="#e8e8e8" textLength="59.4" lengthAdjust="spacingAndGlyphs">0,3712</text>
<text x="1265.8" y="733.5" font-size="20" fill="#e8e8e8" textLength="59.4" lengthAdjust="spacingAndGlyphs">0,4203</text>
<text x="1362.0" y="733.5" font-size="20" fill="#e8e8e8" textLength="59.4" lengthAdjust="spacingAndGlyphs">0,4767</text>
<text x="1458.2" y="733.5" font-size="20" fill="#e8e8e8" textLength="59.4" lengthAdjust="spacingAndGlyphs">0,5070</text>
<text x="1554.4" y="733.5" font-size="20" fill="#e8e8e8" textLength="59.4" lengthAdjust="spacingAndGlyphs">0,5476</text>
<rect x="1003.00" y="741.86" width="642.00" height="30.90" fill="#404040"/>
<rect x="1003.00" y="741.86" width="17.00" height="30.90" fill="url(#g41)"/>
<text x="1026.0" y="764.3" font-size="20" fill="#e8e8e8" textLength="11.0" lengthAdjust="spacingAndGlyphs">Y</text>
<rect x="1164.50" y="742.60" width="94.50" height="27.60" fill="#f0f0f0" stroke="#ffffff" stroke-width="1"/>
<text x="1171.6" y="764.3" font-size="20" fill="#000" textLength="81.2" lengthAdjust="spacingAndGlyphs">187,8439</text>
<text x="1267.8" y="764.3" font-size="20" fill="#e8e8e8" textLength="81.2" lengthAdjust="spacingAndGlyphs">184,5076</text>
<text x="1364.0" y="764.3" font-size="20" fill="#e8e8e8" textLength="81.2" lengthAdjust="spacingAndGlyphs">183,3395</text>
<text x="1460.2" y="764.3" font-size="20" fill="#e8e8e8" textLength="81.2" lengthAdjust="spacingAndGlyphs">182,9107</text>
<text x="1556.4" y="764.3" font-size="20" fill="#e8e8e8" textLength="81.2" lengthAdjust="spacingAndGlyphs">181,7228</text>
<rect x="1003.00" y="772.59" width="642.00" height="30.90" fill="#808080"/>
<rect x="1003.00" y="772.59" width="17.00" height="30.90" fill="url(#g42)"/>
<text x="1026.0" y="795.0" font-size="20" fill="#e8e8e8" textLength="129.0" lengthAdjust="spacingAndGlyphs">Target x:CIE31</text>
<text x="1169.6" y="795.0" font-size="20" fill="#e8e8e8" textLength="59.4" lengthAdjust="spacingAndGlyphs">0,3344</text>
<text x="1265.8" y="795.0" font-size="20" fill="#e8e8e8" textLength="59.4" lengthAdjust="spacingAndGlyphs">0,3564</text>
<text x="1362.0" y="795.0" font-size="20" fill="#e8e8e8" textLength="59.4" lengthAdjust="spacingAndGlyphs">0,3773</text>
<text x="1458.2" y="795.0" font-size="20" fill="#e8e8e8" textLength="59.4" lengthAdjust="spacingAndGlyphs">0,3969</text>
<text x="1554.4" y="795.0" font-size="20" fill="#e8e8e8" textLength="59.4" lengthAdjust="spacingAndGlyphs">0,4193</text>
<rect x="1003.00" y="803.32" width="642.00" height="30.90" fill="#404040"/>
<rect x="1003.00" y="803.32" width="17.00" height="30.90" fill="url(#g43)"/>
<text x="1026.0" y="825.7" font-size="20" fill="#e8e8e8" textLength="129.0" lengthAdjust="spacingAndGlyphs">Target y:CIE31</text>
<text x="1169.6" y="825.7" font-size="20" fill="#e8e8e8" textLength="59.4" lengthAdjust="spacingAndGlyphs">0,3648</text>
<text x="1265.8" y="825.7" font-size="20" fill="#e8e8e8" textLength="59.4" lengthAdjust="spacingAndGlyphs">0,4013</text>
<text x="1362.0" y="825.7" font-size="20" fill="#e8e8e8" textLength="59.4" lengthAdjust="spacingAndGlyphs">0,4358</text>
<text x="1458.2" y="825.7" font-size="20" fill="#e8e8e8" textLength="59.4" lengthAdjust="spacingAndGlyphs">0,4682</text>
<text x="1554.4" y="825.7" font-size="20" fill="#e8e8e8" textLength="59.4" lengthAdjust="spacingAndGlyphs">0,5053</text>
<rect x="1003.00" y="834.05" width="642.00" height="30.90" fill="#808080"/>
<rect x="1003.00" y="834.05" width="17.00" height="30.90" fill="url(#g44)"/>
<text x="1026.0" y="856.4" font-size="20" fill="#e8e8e8" textLength="75.5" lengthAdjust="spacingAndGlyphs">Target Y</text>
<text x="1171.6" y="856.4" font-size="20" fill="#e8e8e8" textLength="81.2" lengthAdjust="spacingAndGlyphs">168,1432</text>
<text x="1267.8" y="856.4" font-size="20" fill="#e8e8e8" textLength="81.2" lengthAdjust="spacingAndGlyphs">165,1917</text>
<text x="1364.0" y="856.4" font-size="20" fill="#e8e8e8" textLength="81.2" lengthAdjust="spacingAndGlyphs">162,9240</text>
<text x="1460.2" y="856.4" font-size="20" fill="#e8e8e8" textLength="81.2" lengthAdjust="spacingAndGlyphs">161,1443</text>
<text x="1556.4" y="856.4" font-size="20" fill="#e8e8e8" textLength="81.2" lengthAdjust="spacingAndGlyphs">159,4237</text>
</svg>
<div class="f" style="left:1037.7px;top:47.9px;width:667.9px;height:550.4px;clip-path:polygon(138.2px 547.2px,138.1px 547.2px,138.0px 547.3px,137.9px 547.3px,137.8px 547.3px,137.7px 547.3px,137.6px 547.3px,137.4px 547.4px,137.2px 547.4px,137.0px 547.3px,136.7px 547.3px,136.4px 547.2px,136.0px 547.2px,135.8px 547.0px,135.5px 546.9px,135.2px 546.7px,134.8px 546.5px,134.5px 546.2px,134.1px 546.0px,133.6px 545.6px,133.0px 545.3px,132.5px 544.9px,131.9px 544.4px,131.2px 543.9px,130.5px 543.3px,129.7px 542.8px,128.8px 542.1px,127.9px 541.4px,126.8px 540.7px,125.6px 539.8px,124.3px 538.9px,122.9px 537.9px,121.4px 536.8px,119.8px 535.6px,118.1px 534.2px,116.3px 532.7px,114.3px 531.0px,112.2px 529.1px,110.0px 527.0px,107.5px 524.3px,104.8px 521.0px,101.8px 517.2px,98.5px 512.6px,94.9px 507.2px,91.1px 501.0px,87.0px 493.5px,82.5px 484.8px,77.6px 474.9px,72.4px 463.4px,66.7px 450.2px,60.6px 435.4px,54.5px 418.7px,48.3px 400.0px,42.1px 379.2px,36.0px 356.8px,29.9px 332.4px,23.9px 306.3px,18.6px 279.6px,13.8px 252.2px,9.6px 224.3px,6.4px 197.0px,4.2px 170.6px,3.0px 144.8px,3.0px 120.6px,4.4px 97.9px,7.0px 76.7px,10.9px 58.0px,16.4px 41.9px,23.1px 28.2px,30.8px 17.4px,39.4px 10.0px,49.0px 5.5px,58.9px 3.1px,69.2px 3.0px,79.9px 5.1px,90.6px 8.1px,101.4px 11.8px,112.2px 16.5px,122.8px 21.4px,133.1px 26.5px,143.2px 31.8px,153.1px 37.4px,162.9px 43.1px,172.6px 49.1px,182.3px 55.3px,191.9px 61.7px,201.5px 68.3px,211.0px 75.0px,220.5px 81.9px,230.0px 88.9px,239.5px 96.0px,248.9px 103.2px,258.4px 110.5px,267.8px 117.9px,277.3px 125.4px,286.8px 132.9px,296.3px 140.5px,305.7px 148.1px,315.1px 155.8px,324.5px 163.4px,333.9px 171.1px,343.3px 178.7px,352.6px 186.3px,361.9px 193.9px,371.1px 201.5px,380.2px 209.0px,389.2px 216.4px,398.2px 223.8px,407.0px 231.0px,415.7px 238.2px,424.2px 245.3px,432.6px 252.2px,440.9px 259.0px,448.9px 265.6px,456.8px 272.0px,464.4px 278.3px,471.7px 284.4px,478.8px 290.2px,485.5px 295.7px,491.8px 300.9px,497.9px 306.0px,503.8px 310.8px,509.4px 315.4px,514.8px 319.8px,519.7px 323.9px,524.4px 327.7px,528.7px 331.2px,532.8px 334.6px,536.6px 337.7px,540.1px 340.6px,543.4px 343.3px,546.4px 345.8px,549.2px 348.1px,551.8px 350.2px,554.2px 352.2px,556.4px 354.0px,558.5px 355.7px,560.4px 357.3px,562.2px 358.8px,563.9px 360.2px,565.5px 361.6px,567.0px 362.8px,568.4px 364.0px,569.8px 365.1px,571.0px 366.1px,572.1px 367.0px,573.2px 367.9px,574.2px 368.6px,575.1px 369.4px,575.8px 370.0px,576.6px 370.6px,577.2px 371.2px,577.8px 371.7px,578.4px 372.1px,578.9px 372.5px,579.3px 372.9px,579.7px 373.2px,580.3px 373.7px,580.8px 374.1px,581.3px 374.6px,581.7px 374.9px,582.1px 375.2px,582.4px 375.5px,582.8px 375.8px,583.2px 376.1px,583.5px 376.3px)"><i></i><i style="background:linear-gradient(90deg,#006d00 46px,#006d00 85px)"></i><i style="background:linear-gradient(90deg,#006e00 40px,#006e00 95px)"></i><i style="background:linear-gradient(90deg,#006e00 35px,#006e00 104px)"></i><i style="background:linear-gradient(90deg,#006e00 32px,#006e00 111px)"></i><i style="background:linear-gradient(90deg,#006f00 28px,#006f00 117px)"></i><i style="background:linear-gradient(90deg,#006f00 26px,#006f00 124px)"></i><i style="background:linear-gradient(90deg,#007001 24px,#007000 130px)"></i><i style="background:linear-gradient(90deg,#007002 22px,#007000 136px)"></i><i style="background:linear-gradient(90deg,#007102 20px,#007100 142px)"></i><i style="background:linear-gradient(90deg,#007203 19px,#007200 147px)"></i><i style="background:linear-gradient(90deg,#007203 17px,#007200 153px)"></i><i style="background:linear-gradient(90deg,#007304 16px,#007300 158px)"></i><i style="background:linear-gradient(90deg,#007405 14px,#007400 142px,#007400 163px)"></i><i style="background:linear-gradient(90deg,#007505 13px,#007500 133px,#007500 168px)"></i><i style="background:linear-gradient(90deg,#007506 12px,#007500 128px,#007500 173px)"></i><i style="background:linear-gradient(90deg,#007607 11px,#007600 127px,#007600 178px)"></i><i style="background:linear-gradient(90deg,#007707 10px,#007700 126px,#007700 182px)"></i><i style="background:linear-gradient(90deg,#007808 9px,#007800 129px,#007800 187px)"></i><i style="background:linear-gradient(90deg,#007909 9px,#007900 129px,#007900 191px)"></i><i style="background:linear-gradient(90deg,#007a09 8px,#007a00 132px,#007a00 196px)"></i><i style="background:linear-gradient(90deg,#007b0a 7px,#007b00 135px,#007b00 200px)"></i><i style="background:linear-gradient(90deg,#007c0b 7px,#007c00 139px,#007c00 205px)"></i><i style="background:linear-gradient(90deg,#007d0c 6px,#007d00 142px,#007d00 209px)"></i><i style="background:linear-gradient(90deg,#007e0c 5px,#007e00 145px,#007e00 213px)"></i><i style="background:linear-gradient(90deg,#007f0d 5px,#007f00 149px,#007f00 217px)"></i><i style="background:linear-gradient(90deg,#00800e 4px,#008000 152px,#008000 221px)"></i><i style="background:linear-gradient(90deg,#00810f 4px,#008100 156px,#008100 225px)"></i><i style="background:linear-gradient(90deg,#008210 4px,#008200 160px,#008200 229px)"></i><i style="background:linear-gradient(90deg,#008310 3px,#008300 163px,#008300 233px)"></i><i style="background:linear-gradient(90deg,#008411 3px,#008400 167px,#008400 237px)"></i><i style="background:linear-gradient(90deg,#008512 3px,#008500 171px,#008500 241px)"></i><i style="background:linear-gradient(90deg,#008713 2px,#008700 174px,#008700 245px)"></i><i style="background:linear-gradient(90deg,#008814 2px,#008800 178px,#008800 249px)"></i><i style="background:linear-gradient(90deg,#008915 2px,#008900 182px,#008900 253px)"></i><i style="background:linear-gradient(90deg,#008a16 2px,#008a00 186px,#018a00 257px)"></i><i style="background:linear-gradient(90deg,#008b17 2px,#008b00 190px,#028b00 258px,#058b00 261px)"></i><i style="background:linear-gradient(90deg,#008c18 1px,#008c00 193px,#038c00 257px,#088c00 265px)"></i><i style="background:linear-gradient(90deg,#008d19 1px,#008d00 197px,#018d00 253px,#0c8d00 269px)"></i><i style="background:linear-gradient(90deg,#008e1a 1px,#008e00 201px,#018e00 253px,#108e00 272px)"></i><i style="background:linear-gradient(90deg,#008f1b 1px,#008f00 205px,#028f00 253px,#148f00 276px)"></i><i style="background:linear-gradient(90deg,#00901c 1px,#009000 209px,#039000 253px,#189000 280px)"></i><i style="background:linear-gradient(90deg,#00911d 1px,#009100 213px,#019100 249px,#1c9100 284px)"></i><i style="background:linear-gradient(90deg,#00921e 1px,#009200 221px,#029200 249px,#219200 288px)"></i><i style="background:linear-gradient(90deg,#00921f 1px,#009200 225px,#029200 249px,#259200 291px)"></i><i style="background:linear-gradient(90deg,#009320 1px,#009300 229px,#039300 249px,#2a9300 295px)"></i><i style="background:linear-gradient(90deg,#009421 1px,#009400 233px,#049400 249px,#2f9400 299px)"></i><i style="background:linear-gradient(90deg,#009522 1px,#009500 237px,#0c9500 257px,#349500 303px)"></i><i style="background:linear-gradient(90deg,#009623 1px,#009600 241px,#3a9600 306px)"></i><i style="background:linear-gradient(90deg,#009625 1px,#009600 241px,#3f9600 310px)"></i><i style="background:linear-gradient(90deg,#009726 1px,#019700 241px,#459700 314px)"></i><i style="background:linear-gradient(90deg,#009827 1px,#029800 241px,#4b9800 317px)"></i><i style="background:linear-gradient(90deg,#009828 2px,#009801 234px,#159800 262px,#529800 321px)"></i><i style="background:linear-gradient(90deg,#009929 2px,#009902 234px,#329900 290px,#589900 325px)"></i><i style="background:linear-gradient(90deg,#00992b 2px,#009903 234px,#409900 302px,#5f9900 328px)"></i><i style="background:linear-gradient(90deg,#009a2c 2px,#009a06 230px,#0e9a01 250px,#639a00 330px,#669a00 332px)"></i><i style="background:linear-gradient(90deg,#009a2d 2px,#009a07 230px,#139a01 254px,#669a00 330px,#6d9a00 336px)"></i><i style="background:linear-gradient(90deg,#009b2e 2px,#009b08 230px,#319b00 282px,#759b00 340px)"></i><i style="background:linear-gradient(90deg,#009b30 2px,#009b09 230px,#339b00 282px,#7c9b00 343px)"></i><i style="background:linear-gradient(90deg,#009b31 3px,#009b0b 227px,#0b9b07 243px,#3e9b00 291px,#859b00 347px)"></i><i style="background:linear-gradient(90deg,#009b32 3px,#009b0c 227px,#379b00 283px,#8d9b00 351px)"></i><i style="background:linear-gradient(90deg,#009b33 3px,#009b0e 227px,#479b00 295px,#969b00 354px)"></i><i style="background:linear-gradient(90deg,#009c35 3px,#009c0f 227px,#4e9c00 299px,#9c9800 358px)"></i><i style="background:linear-gradient(90deg,#009c36 4px,#009c11 224px,#2a9c06 268px,#609c00 312px,#9c9800 356px,#9c9000 362px)"></i><i style="background:linear-gradient(90deg,#009c37 4px,#009c12 224px,#449c02 288px,#9c9b00 352px,#9c8800 365px)"></i><i style="background:linear-gradient(90deg,#009c38 4px,#009c14 224px,#509c01 296px,#9a9c00 348px,#9b8100 369px)"></i><i style="background:linear-gradient(90deg,#009c3a 5px,#019c15 225px,#539c02 297px,#9c9900 349px,#9b7900 373px)"></i><i style="background:linear-gradient(90deg,#009c3b 5px,#029c16 225px,#559c03 297px,#9c9c00 345px,#9b7300 376px)"></i><i style="background:linear-gradient(90deg,#009c3c 5px,#009c19 221px,#4e9c07 289px,#869c00 329px,#999c00 341px,#9a6c00 380px)"></i><i style="background:linear-gradient(90deg,#009c3e 6px,#019c1a 222px,#569c07 294px,#909c00 334px,#9c9a00 342px,#996600 383px)"></i><i style="background:linear-gradient(90deg,#009c3f 6px,#029c1c 222px,#589c09 294px,#949c00 334px,#9c9600 342px,#986100 386px,#986000 387px)"></i><i style="background:linear-gradient(90deg,#009c41 6px,#009c1e 218px,#509c0d 286px,#989c00 334px,#996200 382px,#975a00 391px)"></i><i style="background:linear-gradient(90deg,#009c42 7px,#019c20 219px,#539c0e 287px,#9c9a00 335px,#9c7000 367px,#955400 394px)"></i><i style="background:linear-gradient(90deg,#009c44 7px,#029c21 219px,#569c10 287px,#9a9c02 331px,#9c6d00 367px,#944f00 398px)"></i><i style="background:linear-gradient(90deg,#009c45 7px,#009c24 215px,#4e9c14 279px,#9c9803 331px,#9c6e00 363px,#924a00 402px)"></i><i style="background:linear-gradient(90deg,#009c47 8px,#019c26 216px,#569c14 284px,#9c9b06 328px,#9c6f00 360px,#934a00 400px,#904500 405px)"></i><i style="background:linear-gradient(90deg,#009c48 8px,#039c27 216px,#549c17 280px,#9a9c09 324px,#9c6c00 360px,#934800 400px,#8e4100 409px)"></i><i style="background:linear-gradient(90deg,#009c4a 9px,#009c2a 213px,#519c1a 277px,#9c990b 325px,#9c6d00 357px,#944900 397px,#8c3c00 413px)"></i><i style="background:linear-gradient(90deg,#009c4b 9px,#029c2c 213px,#549c1c 277px,#9c9b0e 321px,#9c6e02 353px,#944700 397px,#8a3800 416px)"></i><i style="background:linear-gradient(90deg,#009c4d 10px,#009c2f 210px,#469c21 266px,#9a9c12 318px,#9c6b03 354px,#944400 398px,#883400 420px)"></i><i style="background:linear-gradient(90deg,#009c4f 10px,#009c30 210px,#559c21 274px,#9c9913 318px,#9c6c05 350px,#954500 394px,#863100 423px)"></i><i style="background:linear-gradient(90deg,#009c50 10px,#029c32 210px,#589c23 274px,#9c9b17 314px,#9c7209 342px,#984a00 386px,#842d00 427px)"></i><i style="background:linear-gradient(90deg,#009c52 11px,#009c35 207px,#499c28 263px,#999c1a 311px,#9c6a09 347px,#974400 391px,#812a00 431px)"></i><i style="background:linear-gradient(90deg,#009c54 11px,#019c37 207px,#529c29 267px,#9c991c 311px,#9c700d 339px,#964200 391px,#7f2700 434px)"></i><i style="background:linear-gradient(90deg,#009c56 12px,#039c3a 208px,#569c2c 268px,#9c9b20 308px,#9c7110 336px,#984300 388px,#7d2400 438px)"></i><i style="background:linear-gradient(90deg,#009c58 12px,#009c3d 204px,#4d9c30 260px,#999c24 304px,#9c690f 340px,#963e00 392px,#7a2100 442px)"></i><i style="background:linear-gradient(90deg,#009c59 13px,#019c3f 205px,#579c31 265px,#9c9825 305px,#9c6e14 333px,#9a4403 381px,#7d2200 437px,#781e00 445px)"></i><i style="background:linear-gradient(90deg,#009c5b 13px,#009c42 201px,#479c37 253px,#9c9b29 301px,#9c6f17 329px,#9b4806 373px,#872900 421px,#761c00 449px)"></i><i style="background:linear-gradient(90deg,#009c5d 14px,#009c44 202px,#519c38 258px,#9a9c2d 298px,#9c6c18 330px,#9a4206 378px,#822300 430px,#731a00 453px)"></i><i style="background:linear-gradient(90deg,#009c5f 14px,#029c47 202px,#559c3b 258px,#979c31 294px,#9c902c 302px,#9c6819 330px,#9a4007 378px,#822200 430px,#711700 456px)"></i><i style="background:linear-gradient(90deg,#009c61 15px,#009c4a 199px,#4b9c3f 251px,#9c9b34 295px,#9c6e1f 323px,#9c490d 363px,#912f02 403px,#6f1500 460px)"></i><i style="background:linear-gradient(90deg,#009c64 15px,#019c4d 199px,#559c41 255px,#9a9c38 291px,#9c6a20 323px,#9c440c 367px,#8d2901 411px,#6c1300 464px)"></i><i style="background:linear-gradient(90deg,#009c66 16px,#009c50 196px,#3e9c48 240px,#979c3c 288px,#9c8832 300px,#9c5e1c 332px,#983507 388px,#791900 444px,#6a1200 467px)"></i><i style="background:linear-gradient(90deg,#009c68 16px,#009c53 196px,#4f9c49 248px,#9c9a3f 288px,#9c7229 312px,#9c4a14 352px,#942e06 396px,#711400 456px,#681000 471px)"></i><i style="background:linear-gradient(90deg,#009c6a 17px,#029c56 197px,#539c4c 249px,#9a9c44 285px,#9c6d2a 313px,#9c4715 353px,#942c07 397px,#701300 457px,#660e00 474px)"></i><i style="background:linear-gradient(90deg,#009c6c 18px,#009c59 194px,#499c51 242px,#989c48 282px,#9c8038 298px,#9c5821 330px,#98310b 386px,#731300 454px,#650d00 478px)"></i><i style="background:linear-gradient(90deg,#009c6f 18px,#019c5c 194px,#549c53 246px,#9c994a 282px,#9c7032 306px,#9c4a1c 342px,#972d0a 390px,#701100 458px,#630b00 482px)"></i><i style="background:linear-gradient(90deg,#009c71 19px,#009c60 191px,#3c9c5a 231px,#929c51 275px,#9b9c50 279px,#9c7136 303px,#9c4b1e 339px,#972b0b 391px,#6d0f00 463px,#610a00 485px)"></i><i style="background:linear-gradient(90deg,#009c74 19px,#009c63 191px,#569c5b 243px,#989c55 275px,#9c6733 307px,#9c421b 347px,#96290c 391px,#6a0d00 467px,#600900 489px)"></i><i style="background:linear-gradient(90deg,#009c76 20px,#029c67 192px,#529c60 240px,#9c9857 276px,#9c6e3b 300px,#9c4822 336px,#98290e 388px,#6c0d00 464px,#5e0800 493px)"></i><i style="background:linear-gradient(90deg,#009c79 21px,#009c6b 189px,#489c65 233px,#9c9b5d 273px,#9c6f3f 297px,#9c4825 333px,#97270e 389px,#6a0b00 469px,#5d0700 496px)"></i><i style="background:linear-gradient(90deg,#009c7c 21px,#019c6e 189px,#549c68 237px,#999c63 269px,#9c6a40 297px,#9c4625 333px,#97250f 389px,#690a00 469px,#5c0600 500px)"></i><i style="background:linear-gradient(90deg,#009c7e 22px,#009c72 186px,#3a9c6e 222px,#8d9c68 262px,#9c9764 270px,#9c6c44 294px,#9c4628 330px,#972410 390px,#690a00 470px,#5c0500 504px)"></i><i style="background:linear-gradient(90deg,#009c81 23px,#009c76 187px,#559c71 235px,#9c9a6b 267px,#9c6d49 291px,#9c462b 327px,#982412 387px,#6d0a01 463px,#5b0400 507px)"></i><i style="background:linear-gradient(90deg,#009c84 23px,#039c7a 187px,#529c76 231px,#9a9c72 263px,#9c6e4e 287px,#9c462f 323px,#992313 383px,#790e04 443px,#5d0400 499px,#5a0300 511px)"></i><i style="background:linear-gradient(90deg,#009c87 24px,#009c7f 184px,#4f9c7b 228px,#989c77 260px,#9c7c5e 276px,#9c553e 304px,#9c3322 348px,#961e11 392px,#660701 476px,#5a0200 515px)"></i><i style="background:linear-gradient(90deg,#009c8a 25px,#029c83 185px,#549c80 229px,#9c987a 261px,#9c7058 281px,#9c4a38 313px,#9c291c 365px,#8e160d 409px,#5f0400 493px,#5a0200 518px)"></i><i style="background:linear-gradient(90deg,#009c8d 25px,#009c88 181px,#3f9c86 217px,#9c9b82 257px,#9c715e 277px,#9c4a3c 309px,#9c281e 361px,#921810 401px,#600400 489px,#5a0100 522px)"></i><i style="background:linear-gradient(90deg,#009c91 26px,#019c8c 182px,#559c8a 226px,#999c89 254px,#9c6c5e 278px,#9c473c 310px,#9c261f 362px,#921611 402px,#5f0300 490px,#5a0000 526px)"></i><i style="background:linear-gradient(90deg,#009c94 27px,#009c91 179px,#289c90 203px,#819c8f 243px,#969c8f 251px,#9c8c81 259px,#9c6259 283px,#9c3d37 319px,#991c18 383px,#7a0a07 443px,#5d0200 499px,#5a0000 529px)"></i><i style="background:linear-gradient(90deg,#009c97 27px,#009c96 179px,#4e9c96 219px,#9c9993 251px,#9c6f6a 271px,#9c4744 303px,#9c2623 355px,#951614 395px,#600201 487px,#5a0000 533px)"></i><i style="background:linear-gradient(90deg,#009c9b 28px,#039c9b 180px,#549c9b 220px,#9b9c9c 248px,#9c7070 268px,#9c4b4c 296px,#9c292a 344px,#961616 392px,#620202 484px,#5a0000 528px,#5a0000 537px)"></i><i style="background:linear-gradient(90deg,#00999c 29px,#00979c 177px,#4d969c 217px,#9c949b 249px,#9c6b70 269px,#9c4448 301px,#9c2326 353px,#941315 397px,#600102 489px,#5a0000 537px,#5a0000 540px)"></i><i style="background:linear-gradient(90deg,#00959c 30px,#02929c 178px,#58909c 222px,#9c8c99 250px,#9c656f 270px,#9c4148 302px,#9c2127 354px,#941116 398px,#600002 490px,#5a0000 542px,#5a0000 544px)"></i><i style="background:linear-gradient(90deg,#00929c 30px,#008d9c 174px,#418b9c 210px,#95899c 246px,#9c8598 250px,#9c606f 270px,#9c3d48 302px,#9c1f27 354px,#941016 398px,#5f0003 490px,#5a0000 546px,#5a0000 547px)"></i><i style="background:linear-gradient(90deg,#008e9c 31px,#01889c 175px,#54859c 219px,#96839c 247px,#9c768d 255px,#9c5163 279px,#9c313f 315px,#9a151e 379px,#81070d 431px,#5e0003 495px,#5a0000 551px)"></i><i style="background:linear-gradient(90deg,#008b9c 32px,#00849c 172px,#36819c 204px,#8e7d9c 244px,#987d9c 248px,#9c566e 272px,#9c3749 304px,#9c1b28 356px,#950e18 396px,#620004 484px,#5a0000 528px,#5a0000 555px)"></i><i style="background:linear-gradient(90deg,#00879c 33px,#007f9c 173px,#507b9c 217px,#99779c 249px,#9c526e 273px,#9c3449 305px,#9c1929 357px,#940d19 397px,#630005 481px,#5a0001 521px,#5a0000 558px)"></i><i style="background:linear-gradient(90deg,#00849c 33px,#037b9c 173px,#52769c 217px,#9b729c 249px,#9c4d6e 273px,#9c2e46 309px,#9c1526 365px,#8e0815 409px,#600004 489px,#5a0000 541px,#5a0000 562px)"></i><i style="background:linear-gradient(90deg,#00819c 34px,#00779c 170px,#4c729c 214px,#9c6c9b 250px,#9c496d 274px,#9c2b46 310px,#9b1225 370px,#8c0614 414px,#5f0004 490px,#5a0000 542px,#5a0000 566px)"></i><i style="background:linear-gradient(90deg,#007e9c 35px,#02729c 171px,#576c9c 219px,#9c6699 251px,#9c456d 275px,#9c2947 311px,#9b1025 371px,#8b0515 415px,#5f0005 491px,#5a0000 547px,#5a0000 569px)"></i><i style="background:linear-gradient(90deg,#007b9c 36px,#006f9c 168px,#49699c 212px,#96639c 248px,#9c598f 256px,#9c3d67 280px,#9c2241 320px,#980a1f 388px,#6c0009 464px,#5b0003 508px,#5a0000 573px)"></i><i style="background:linear-gradient(90deg,#00779c 36px,#026b9c 168px,#53649c 216px,#975e9c 248px,#9c4f86 260px,#9c335d 288px,#9c1a39 332px,#97081f 388px,#71000b 456px,#5b0004 504px,#5a0000 577px)"></i><i style="background:linear-gradient(90deg,#00749c 37px,#00679c 165px,#46619c 209px,#99599c 249px,#9c396c 277px,#9c2147 313px,#9a0a25 377px,#820012 429px,#5e0005 493px,#5a0000 573px,#5a0000 580px)"></i><i style="background:linear-gradient(90deg,#00719c 38px,#01639c 166px,#575b9c 218px,#9b549c 250px,#9c356b 278px,#9c1c44 318px,#980722 386px,#75000d 450px,#5c0005 502px,#5a0000 584px)"></i><i style="background:linear-gradient(90deg,#006e9c 39px,#00609c 163px,#3d5a9c 203px,#93519c 247px,#9c4f9b 251px,#9c3570 275px,#9c1e4b 311px,#9b0929 371px,#8b0018 415px,#5f0006 491px,#5a0002 547px,#5a0000 585px)"></i><i style="background:linear-gradient(90deg,#006b9c 40px,#015d9c 164px,#54539c 216px,#9c4a9a 252px,#9c3170 276px,#9c1b4b 312px,#9b0729 372px,#880016 420px,#5f0007 492px,#5a0001 556px,#5a0000 581px)"></i><i style="background:linear-gradient(90deg,#00699c 41px,#005a9c 161px,#3a539c 201px,#8e499c 245px,#9c4598 253px,#9c2e6f 277px,#9c1748 317px,#990324 385px,#76000f 449px,#5c0006 501px,#5a0001 573px)"></i><i style="background:linear-gradient(90deg,#00669c 41px,#00569c 161px,#514c9c 213px,#98449c 249px,#9c317a 269px,#9c1a51 305px,#9c072f 361px,#92001e 401px,#600008 489px,#5a0003 541px,#5a0001 565px)"></i><i style="background:linear-gradient(90deg,#00639c 42px,#03539c 162px,#53489c 214px,#993f9c 250px,#9c2469 282px,#9c1042 326px,#980025 386px,#70000d 458px,#5b0006 506px,#5a0002 558px)"></i><i style="background:linear-gradient(90deg,#00609c 43px,#00509c 159px,#55459c 215px,#9b3b9c 251px,#9c246e 279px,#9c1048 319px,#980025 387px,#66000a 475px,#5a0005 515px,#5a0003 550px)"></i><i style="background:linear-gradient(90deg,#005d9c 44px,#034d9c 160px,#58419c 216px,#9c379b 252px,#9c216d 280px,#9c0e48 320px,#970025 388px,#66000b 476px,#5a0006 516px,#5a0004 542px)"></i><i style="background:linear-gradient(90deg,#005b9c 45px,#004a9c 157px,#533e9c 213px,#9c3399 253px,#9c1e6d 281px,#9c0b46 325px,#980027 385px,#750011 449px,#5c0007 501px,#5a0005 534px)"></i><i style="background:linear-gradient(90deg,#00589c 46px,#02479c 158px,#553b9c 214px,#97319c 250px,#9c2889 262px,#9c155f 294px,#9c053c 342px,#970026 390px,#65000b 478px,#5a0006 518px,#5a0005 526px)"></i><i style="background:linear-gradient(90deg,#00559c 47px,#00449c 155px,#50389c 211px,#992d9c 251px,#9c186c 283px,#9c0746 327px,#9b002d 375px,#86001a 423px,#5e0009 495px,#5a0006 519px)"></i><i style="background:linear-gradient(90deg,#00539c 48px,#02419c 156px,#52359c 212px,#9b299c 252px,#9c156c 284px,#9c0546 328px,#9a002c 380px,#7e0016 436px,#5d0009 496px,#5a0007 511px)"></i><i style="background:linear-gradient(90deg,#00509c 49px,#003f9c 153px,#4e329c 209px,#9c269b 253px,#9c1470 281px,#9c0448 325px,#970028 389px,#65000c 477px,#5c0008 503px)"></i><i style="background:linear-gradient(90deg,#004e9c 50px,#023c9c 154px,#572e9c 214px,#9c2299 254px,#9c116f 282px,#9c0248 326px,#98002a 386px,#720012 454px,#5e000a 495px)"></i><i style="background:linear-gradient(90deg,#004b9c 51px,#003a9c 151px,#522c9c 211px,#98209c 251px,#9c1784 267px,#9c075b 303px,#9c003d 347px,#970029 391px,#64000d 479px,#60000b 487px)"></i><i style="background:linear-gradient(90deg,#00499c 52px,#02379c 152px,#54299c 212px,#991d9c 252px,#9c0b6a 288px,#9c0044 336px,#98002b 388px,#66000d 476px,#64000d 479px)"></i><i style="background:linear-gradient(90deg,#00469c 53px,#00359c 149px,#50279c 209px,#9b199c 253px,#9c0a6e 285px,#9c0049 329px,#97002b 389px,#68000f 472px)"></i><i style="background:linear-gradient(90deg,#00449c 54px,#02329c 150px,#58239c 214px,#9c169a 254px,#9c076d 286px,#9c004b 326px,#98002d 386px,#720013 454px,#6c0011 464px)"></i><i style="background:linear-gradient(90deg,#00419c 55px,#00309c 147px,#55219c 211px,#9c1299 255px,#9c056c 287px,#9c0048 331px,#98002d 387px,#710013 456px)"></i><i style="background:linear-gradient(90deg,#003f9c 56px,#022e9c 148px,#571e9c 212px,#99119c 252px,#9c0168 292px,#9c0041 344px,#96002b 392px,#760016 448px)"></i><i style="background:linear-gradient(90deg,#003c9c 57px,#002c9c 145px,#531c9c 209px,#9b0e9c 253px,#9c006b 289px,#9c0046 337px,#97002d 389px,#7b0019 440px)"></i><i style="background:linear-gradient(90deg,#003a9c 58px,#03299c 146px,#55199c 210px,#9c0b9b 254px,#9c006f 286px,#9c0048 334px,#97002d 390px,#80001c 433px)"></i><i style="background:linear-gradient(90deg,#00389c 60px,#01289c 144px,#57169c 212px,#9c0899 256px,#9c006e 288px,#9c0048 336px,#98002f 388px,#85001f 425px)"></i><i style="background:linear-gradient(90deg,#00359c 61px,#03259c 145px,#59139c 213px,#99069c 253px,#9c0071 285px,#9c004a 333px,#97002f 389px,#8a0022 417px)"></i><i style="background:linear-gradient(90deg,#00339c 62px,#01239c 142px,#56129c 210px,#9b039c 254px,#9c006d 290px,#9c0046 342px,#97002f 390px,#8e0026 409px)"></i><i style="background:linear-gradient(90deg,#00319c 63px,#00229c 139px,#4d119c 203px,#9c009b 255px,#9c0070 287px,#9c004a 335px,#980031 387px,#92002a 401px)"></i><i style="background:linear-gradient(90deg,#002f9c 65px,#021f9c 141px,#540e9c 209px,#9c0099 257px,#9c006f 289px,#9c0048 341px,#970031 389px,#96002e 394px)"></i><i style="background:linear-gradient(90deg,#002c9c 66px,#001e9c 138px,#510c9c 206px,#9a009c 254px,#9c006a 294px,#9c0043 350px,#980032 386px)"></i><i style="background:linear-gradient(90deg,#002a9c 67px,#021b9c 139px,#59089c 211px,#95009c 251px,#9b009c 255px,#9c006e 291px,#9c0047 343px,#9a0037 378px)"></i><i style="background:linear-gradient(90deg,#00289c 69px,#001a9c 137px,#55079c 209px,#90009c 249px,#9c009a 257px,#9c006d 293px,#9c0047 345px,#9b003b 370px)"></i><i style="background:linear-gradient(90deg,#00269c 70px,#03189c 138px,#58049c 210px,#99009c 254px,#9c0068 298px,#9c0043 354px,#9c003f 362px)"></i><i style="background:linear-gradient(90deg,#00249c 71px,#01169c 135px,#54039c 207px,#9a009c 255px,#9c006b 295px,#9c0045 351px,#9c0043 354px)"></i><i style="background:linear-gradient(90deg,#00229c 73px,#00159c 133px,#51029c 205px,#9c009b 257px,#9c006e 293px,#9c0048 347px)"></i><i style="background:linear-gradient(90deg,#00209c 74px,#02139c 134px,#53009c 206px,#9c0099 258px,#9c006e 294px,#9c004d 339px)"></i><i style="background:linear-gradient(90deg,#001e9c 75px,#00119c 131px,#56009c 207px,#9a009c 255px,#9c006d 295px,#9c0052 331px)"></i><i style="background:linear-gradient(90deg,#001b9c 77px,#030f9c 133px,#53009c 205px,#9c009b 257px,#9c0070 293px,#9c0057 323px)"></i><i style="background:linear-gradient(90deg,#00199c 78px,#010e9c 130px,#4b009c 198px,#9c0099 258px,#9c006f 294px,#9c005d 315px)"></i><i style="background:linear-gradient(90deg,#00179c 80px,#000d9c 128px,#44009c 192px,#9a009c 256px,#9c006a 300px,#9c0064 308px)"></i><i style="background:linear-gradient(90deg,#00159c 81px,#020b9c 129px,#3d009c 185px,#96009c 253px,#9c0096 261px,#9c006b 300px)"></i><i style="background:linear-gradient(90deg,#00139c 83px,#010a9c 127px,#3a009c 183px,#92009c 251px,#9c0099 259px,#9c0072 292px)"></i><i style="background:linear-gradient(90deg,#00119c 84px,#03079c 128px,#34009c 176px,#88009c 244px,#9a009c 256px,#9c007a 284px)"></i><i style="background:linear-gradient(90deg,#000f9c 86px,#02069c 126px,#32009c 174px,#8b009c 246px,#9c009b 258px,#9c0083 276px)"></i><i style="background:linear-gradient(90deg,#000d9b 87px,#00059b 123px,#34009b 175px,#8c009b 247px,#9b0098 259px,#9b008c 268px)"></i><i style="background:linear-gradient(90deg,#000b9a 89px,#03039a 125px,#55009a 205px,#99009a 257px,#9a0096 261px)"></i><i style="background:linear-gradient(90deg,#000999 91px,#020299 123px,#570099 207px,#920099 253px)"></i><i style="background:linear-gradient(90deg,#000798 93px,#010198 121px,#540098 205px,#860098 245px)"></i><i style="background:linear-gradient(90deg,#000597 95px,#030097 123px,#560097 207px,#7b0097 237px)"></i><i style="background:linear-gradient(90deg,#000396 97px,#020096 121px,#540096 205px,#700096 229px)"></i><i style="background:linear-gradient(90deg,#000195 99px,#020095 119px,#560095 207px,#660095 222px)"></i><i style="background:linear-gradient(90deg,#000094 101px,#040094 121px,#580094 209px,#5d0094 214px)"></i><i style="background:linear-gradient(90deg,#000092 104px,#040092 120px,#540092 206px)"></i><i style="background:linear-gradient(90deg,#000091 106px,#030091 118px,#4c0091 198px)"></i><i style="background:linear-gradient(90deg,#000090 109px,#2c0090 165px,#440090 190px)"></i><i style="background:linear-gradient(90deg,#00008f 112px,#3c008f 182px)"></i><i style="background:linear-gradient(90deg,#04008e 116px,#35008e 175px)"></i><i style="background:linear-gradient(90deg,#07008d 120px,#2e008d 167px)"></i><i style="background:linear-gradient(90deg,#0b008c 124px,#27008c 159px)"></i><i style="background:linear-gradient(90deg,#0f008b 128px,#21008b 151px)"></i><i style="background:linear-gradient(90deg,#13008a 132px,#1b008a 143px)"></i><i></i></div>
<div class="f" style="left:1155.7px;top:203.5px;width:391.2px;height:356.5px;clip-path:polygon(390.2px 178.3px,120.1px 1.0px,1.0px 355.5px)"><i style="background:linear-gradient(90deg,#00f901 117px,#07f900 125px)"></i><i style="background:linear-gradient(90deg,#00fa03 116px,#10fa00 130px)"></i><i style="background:linear-gradient(90deg,#00fb06 115px,#18fb00 134px)"></i><i style="background:linear-gradient(90deg,#00fc08 114px,#14fc02 130px,#21fc00 139px)"></i><i style="background:linear-gradient(90deg,#00fd0a 113px,#14fd04 129px,#2afd00 143px)"></i><i style="background:linear-gradient(90deg,#00fd0c 112px,#14fd06 128px,#34fd00 148px)"></i><i style="background:linear-gradient(90deg,#00fe0f 111px,#15fe09 127px,#3efe00 153px)"></i><i style="background:linear-gradient(90deg,#00fe11 110px,#15fe0b 126px,#48fe00 157px)"></i><i style="background:linear-gradient(90deg,#00ff14 109px,#15ff0d 125px,#53ff00 162px)"></i><i style="background:linear-gradient(90deg,#00ff16 108px,#0fff12 120px,#5fff00 166px)"></i><i style="background:linear-gradient(90deg,#00ff19 107px,#0fff14 119px,#6aff00 171px)"></i><i style="background:linear-gradient(90deg,#00ff1b 106px,#0fff17 118px,#76ff00 175px)"></i><i style="background:linear-gradient(90deg,#00ff1e 105px,#0fff19 117px,#7eff00 177px,#83ff00 180px)"></i><i style="background:linear-gradient(90deg,#00ff21 104px,#10ff1c 116px,#77ff04 172px,#90ff00 185px)"></i><i style="background:linear-gradient(90deg,#00ff23 103px,#10ff1f 115px,#78ff07 171px,#9eff00 189px)"></i><i style="background:linear-gradient(90deg,#00ff26 102px,#10ff22 114px,#79ff09 170px,#adff00 194px)"></i><i style="background:linear-gradient(90deg,#00ff29 101px,#10ff24 113px,#7bff0c 169px,#bcff00 198px)"></i><i style="background:linear-gradient(90deg,#00ff2c 100px,#10ff27 112px,#7cff0f 168px,#ccff00 203px)"></i><i style="background:linear-gradient(90deg,#00ff2f 99px,#10ff2a 111px,#7dff12 167px,#dcff00 207px)"></i><i style="background:linear-gradient(90deg,#00ff32 98px,#10ff2d 110px,#76ff17 162px,#e9ff00 210px,#eeff00 212px)"></i><i style="background:linear-gradient(90deg,#00ff35 97px,#11ff30 109px,#78ff1b 161px,#e2ff04 205px,#fffe00 217px)"></i><i style="background:linear-gradient(90deg,#00ff38 96px,#0aff35 104px,#70ff20 156px,#daff0a 200px,#faff03 212px,#ffec00 221px)"></i><i style="background:linear-gradient(90deg,#00ff3b 95px,#0aff38 103px,#71ff23 155px,#ddff0d 199px,#feff06 211px,#ffdc00 226px)"></i><i style="background:linear-gradient(90deg,#00ff3f 94px,#0aff3c 102px,#73ff26 154px,#dfff10 198px,#fffd09 210px,#ffcd00 230px)"></i><i style="background:linear-gradient(90deg,#00ff42 93px,#0aff3f 101px,#74ff2a 153px,#e2ff14 197px,#f9ff0f 205px,#fffa0d 209px,#ffbf00 235px)"></i><i style="background:linear-gradient(90deg,#00ff45 92px,#0aff42 100px,#76ff2d 152px,#e5ff18 196px,#fcff13 204px,#ffbf01 232px,#ffb200 239px)"></i><i style="background:linear-gradient(90deg,#00ff49 91px,#0aff46 99px,#77ff31 151px,#e8ff1b 195px,#fffe17 203px,#ffc406 227px,#ffa700 244px)"></i><i style="background:linear-gradient(90deg,#00ff4c 90px,#0aff49 98px,#6fff37 146px,#e0ff21 190px,#fffb1a 202px,#ffc109 226px,#ff9c00 249px)"></i><i style="background:linear-gradient(90deg,#00ff50 89px,#0aff4d 97px,#70ff3a 145px,#e3ff25 189px,#fbff21 197px,#ffe217 209px,#ffb008 233px,#ff9100 253px)"></i><i style="background:linear-gradient(90deg,#00ff54 88px,#0bff51 96px,#72ff3e 144px,#dbff2b 184px,#feff25 196px,#ffc312 220px,#ff8f01 252px,#fe8700 258px)"></i><i style="background:linear-gradient(90deg,#00ff57 87px,#0bff55 95px,#73ff42 143px,#deff30 183px,#fffc29 195px,#ffc917 215px,#ff9807 243px,#fc7e00 262px)"></i><i style="background:linear-gradient(90deg,#00ff5b 86px,#0bff59 94px,#75ff46 142px,#e1ff34 182px,#f9ff30 190px,#ffed28 198px,#ffb615 222px,#fd8002 258px,#fa7500 267px)"></i><i style="background:linear-gradient(90deg,#00ff5f 85px,#0bff5d 93px,#76ff4b 141px,#e4ff38 181px,#fdff34 189px,#ffc31d 213px,#ff930c 241px,#f86c00 271px)"></i><i style="background:linear-gradient(90deg,#00ff63 84px,#0bff61 92px,#78ff4f 140px,#e8ff3d 180px,#fffd38 188px,#ffc824 208px,#ff9610 236px,#f96d01 268px,#f56400 276px)"></i><i style="background:linear-gradient(90deg,#00ff68 83px,#0bff65 91px,#6fff55 135px,#dfff43 175px,#f8ff3f 183px,#fff93c 187px,#ffc527 207px,#ff9313 235px,#fa6b03 267px,#f25c00 281px)"></i><i style="background:linear-gradient(90deg,#00ff6c 82px,#0bff69 90px,#71ff5a 134px,#e2ff48 174px,#fcff44 182px,#ffb926 210px,#ff8611 242px,#f66002 274px,#ee5400 285px)"></i><i style="background:linear-gradient(90deg,#00ff70 81px,#0bff6e 89px,#72ff5e 133px,#e5ff4d 173px,#ffff49 181px,#ffc731 201px,#ff941a 229px,#fb6708 265px,#ea4d00 290px)"></i><i style="background:linear-gradient(90deg,#00ff75 80px,#0cff72 88px,#74ff63 132px,#dcff54 168px,#fffb4d 180px,#ffc434 200px,#ff911d 228px,#fb650a 264px,#e64700 294px)"></i><i style="background:linear-gradient(90deg,#00ff79 79px,#0cff77 87px,#76ff68 131px,#dfff59 167px,#faff56 175px,#ffea4b 183px,#ffb833 203px,#ff891d 231px,#fa5f0a 267px,#e24000 299px)"></i><i style="background:linear-gradient(90deg,#00ff7e 78px,#0cff7c 86px,#77ff6d 130px,#e3ff5f 166px,#feff5b 174px,#ffc73f 194px,#ff9225 222px,#fa5d0c 266px,#dd3b00 303px)"></i><i style="background:linear-gradient(90deg,#00ff83 77px,#0cff81 85px,#79ff72 129px,#e7ff64 165px,#fffc5f 173px,#ffc343 193px,#ff8f28 221px,#fb5b0e 265px,#dc3700 305px,#d93500 308px)"></i><i style="background:linear-gradient(90deg,#00ff88 76px,#0cff86 84px,#70ff79 124px,#ddff6c 160px,#f8ff68 168px,#fff863 172px,#ffc046 192px,#ff8c2b 220px,#fb5910 264px,#dd3601 304px,#d43000 313px)"></i><i style="background:linear-gradient(90deg,#00ff8d 75px,#0cff8b 83px,#71ff7f 123px,#e0ff71 159px,#fcff6e 167px,#ffbd49 191px,#ff8a2d 219px,#fc5712 263px,#de3503 303px,#cf2b00 317px)"></i><i style="background:linear-gradient(90deg,#00ff92 74px,#0dff90 82px,#73ff84 122px,#e4ff77 158px,#fffd74 166px,#ffc352 186px,#ff9337 210px,#ff651d 246px,#f3470d 278px,#ca2700 322px)"></i><i style="background:linear-gradient(90deg,#00ff97 73px,#0dff95 81px,#75ff8a 121px,#e8ff7e 157px,#fff978 165px,#ffbf55 185px,#ff8a36 213px,#ff5b1a 253px,#ee3e0b 285px,#c62300 326px)"></i><i style="background:linear-gradient(90deg,#00ff9d 72px,#0dff9b 80px,#77ff90 120px,#deff86 152px,#fbff83 160px,#ffdb6c 172px,#ffaa4e 192px,#ff7c32 220px,#fb4e16 264px,#dd2e06 304px,#c11f00 331px)"></i><i style="background:linear-gradient(90deg,#00ffa3 71px,#04ffa2 75px,#6dff98 115px,#d3ff8e 147px,#ffff89 159px,#ffcc69 175px,#ff9848 199px,#ff6b2b 231px,#fa4916 267px,#da2a06 307px,#bc1b00 335px)"></i><i style="background:linear-gradient(90deg,#00ffa8 70px,#04ffa8 74px,#6eff9e 114px,#d7ff95 146px,#f4ff92 154px,#fffa8e 158px,#ffc86d 174px,#ff954b 198px,#ff682e 230px,#fa4718 266px,#db2907 306px,#b71800 340px)"></i><i style="background:linear-gradient(90deg,#00ffae 69px,#04ffae 73px,#70ffa4 113px,#dbff9c 145px,#f9ff99 153px,#fff692 157px,#ffc471 173px,#ff924e 197px,#ff6630 229px,#fb451a 265px,#dc2809 305px,#b31500 345px)"></i><i style="background:linear-gradient(90deg,#00ffb5 68px,#04ffb4 72px,#66ffac 108px,#d0ffa4 140px,#fdffa1 152px,#ffc174 172px,#ff8f51 196px,#ff5f30 232px,#f9401a 268px,#d52208 312px,#ae1200 349px)"></i><i style="background:linear-gradient(90deg,#00ffbb 67px,#04ffba 71px,#67ffb3 107px,#d4ffac 139px,#fffca6 151px,#ffc780 167px,#ff9259 191px,#ff6538 223px,#fc411e 263px,#de250c 303px,#aa0f00 354px)"></i><i style="background:linear-gradient(90deg,#00ffc1 66px,#04ffc1 70px,#69ffba 106px,#d7ffb3 138px,#f7ffb1 146px,#fff7ab 150px,#ffc384 166px,#ff8f5c 190px,#ff633b 222px,#fa3c1e 266px,#db220c 306px,#a60d00 358px)"></i><i style="background:linear-gradient(90deg,#00ffc8 65px,#04ffc7 69px,#6bffc2 105px,#dbffbb 137px,#fbffba 145px,#ffbf88 165px,#ff8c5f 189px,#ff603d 221px,#fb3b20 265px,#dc210d 305px,#a30b00 363px)"></i><i style="background:linear-gradient(90deg,#00ffcf 64px,#04ffce 68px,#6dffc9 104px,#e0ffc4 136px,#fffec1 144px,#ffc694 160px,#ff976e 180px,#ff6747 212px,#fd3c24 260px,#e52412 296px,#a50b00 360px,#9f0900 367px)"></i><i style="background:linear-gradient(90deg,#00ffd6 63px,#04ffd6 67px,#6fffd1 103px,#d4ffcd 131px,#f4ffcc 139px,#fff9c6 143px,#ffc298 159px,#ff9472 179px,#ff644a 211px,#fd3a26 259px,#e62313 295px,#a30901 363px,#9c0700 372px)"></i><i style="background:linear-gradient(90deg,#00ffdd 62px,#04ffdd 66px,#71ffd9 102px,#d8ffd6 130px,#f9ffd5 138px,#ffe4be 146px,#ffb493 162px,#ff8369 186px,#ff5541 222px,#fa3223 266px,#db1b10 306px,#a00701 366px,#9a0500 377px)"></i><i style="background:linear-gradient(90deg,#00ffe5 61px,#04ffe5 65px,#65ffe2 97px,#ccffe0 125px,#feffde 137px,#ffc6ab 153px,#ff957f 173px,#ff6857 201px,#ff3e32 245px,#f4291f 277px,#b20b05 345px,#980400 381px)"></i><i style="background:linear-gradient(90deg,#00ffed 60px,#04ffed 64px,#67ffeb 96px,#d0ffe9 124px,#f2ffe9 132px,#fffae4 136px,#ffc1af 152px,#ff9183 172px,#ff665a 200px,#ff3c34 244px,#f52720 276px,#c00e09 332px,#9a0401 376px,#960200 386px)"></i><i style="background:linear-gradient(90deg,#00fff5 59px,#04fff5 63px,#69fff4 95px,#d4fff3 123px,#f7fff3 131px,#fff5e9 135px,#ffbdb3 151px,#ff8e86 171px,#ff635d 199px,#ff3a36 243px,#f52622 275px,#c50e0c 327px,#9d0302 371px,#950100 390px)"></i><i style="background:linear-gradient(90deg,#00fffd 58px,#04fffd 62px,#6bfffd 94px,#d9fffe 122px,#fcfffe 130px,#ffc4c3 146px,#ff9291 166px,#ff6565 194px,#ff3b3b 238px,#f82626 270px,#d31111 314px,#9e0303 370px,#950000 391px)"></i><i style="background:linear-gradient(90deg,#00f8ff 57px,#04f8ff 61px,#6af7ff 93px,#d6f6ff 121px,#f9f6ff 129px,#ffebf4 133px,#ffb4bc 149px,#ff878d 169px,#ff5d62 197px,#ff363a 241px,#f72226 273px,#cb0d0f 321px,#9e0204 369px,#950001 388px)"></i><i style="background:linear-gradient(90deg,#00f0ff 56px,#04f0ff 60px,#68eeff 92px,#d1ecff 120px,#f3ebff 128px,#ffe5f9 132px,#ffb0c0 148px,#ff8391 168px,#ff5b65 196px,#ff343c 240px,#f72128 272px,#cc0c11 320px,#9f0104 368px,#970002 382px)"></i><i style="background:linear-gradient(90deg,#00e8ff 55px,#04e8ff 59px,#66e5ff 91px,#cde2ff 119px,#ffe0fe 131px,#ffacc4 147px,#ff8094 167px,#ff5868 195px,#ff323e 239px,#f81f29 271px,#d20c13 315px,#a00005 367px,#9b0004 375px)"></i><i style="background:linear-gradient(90deg,#00e0ff 54px,#04e0ff 58px,#71dcff 94px,#d9d9ff 122px,#fbd7ff 130px,#ffb2d5 142px,#ff84a0 162px,#ff5a70 190px,#ff3546 230px,#fa1f2e 266px,#db0e18 306px,#9f0005 369px)"></i><i style="background:linear-gradient(90deg,#00d9ff 53px,#04d8ff 57px,#6fd4ff 93px,#d5cfff 121px,#f6ceff 129px,#ffc7f7 133px,#ff99c1 149px,#ff7293 169px,#ff4a64 201px,#ff263a 249px,#f11626 281px,#af010a 349px,#a30007 362px)"></i><i style="background:linear-gradient(90deg,#00d2ff 52px,#04d1ff 56px,#6dccff 92px,#e1c6ff 124px,#ffc2fc 132px,#ff95c5 148px,#ff6f97 168px,#ff4766 200px,#ff243c 248px,#f21428 280px,#b0000b 348px,#a90009 355px)"></i><i style="background:linear-gradient(90deg,#00cbff 51px,#04caff 55px,#6cc4ff 91px,#ddbdff 123px,#fdbcff 131px,#ff88be 151px,#ff608b 175px,#ff3d60 207px,#fd1c36 259px,#e60d21 295px,#af000c 349px)"></i><i style="background:linear-gradient(90deg,#00c4ff 50px,#04c3ff 54px,#6abdff 90px,#d9b5ff 122px,#f8b3ff 130px,#ffacf6 134px,#ff84c2 150px,#ff5d8e 174px,#ff3b62 206px,#fd1a38 258px,#e70b22 294px,#b5000e 342px)"></i><i style="background:linear-gradient(90deg,#00bdff 49px,#04bdff 53px,#68b5ff 89px,#d5adff 121px,#f4abff 129px,#ffa7fa 133px,#ff80c6 149px,#ff5992 173px,#ff3865 205px,#fe193a 257px,#e80a24 293px,#bc0011 336px)"></i><i style="background:linear-gradient(90deg,#00b7ff 48px,#04b6ff 52px,#66aeff 88px,#d1a6ff 120px,#ffa2ff 132px,#ff7cca 148px,#ff5695 172px,#ff3667 204px,#ff193e 252px,#ef0b2a 284px,#c30014 329px)"></i><i style="background:linear-gradient(90deg,#00b1ff 47px,#04b0ff 51px,#71a6ff 91px,#dc9dff 123px,#fa9bff 131px,#ff89e6 139px,#ff64b0 159px,#ff417e 187px,#ff2352 227px,#fa1036 267px,#da021e 307px,#ca0017 323px)"></i><i style="background:linear-gradient(90deg,#00abff 46px,#04aaff 50px,#6fa0ff 90px,#d896ff 122px,#f693ff 130px,#ff8ff9 134px,#ff6dc7 150px,#ff4b94 174px,#ff2e68 206px,#fd113d 258px,#e70426 294px,#d1001b 316px)"></i><i style="background:linear-gradient(90deg,#00a5ff 45px,#04a4ff 49px,#6d99ff 89px,#d58fff 121px,#ff8afd 133px,#ff69cb 149px,#ff4897 173px,#ff2b6a 205px,#fe0f3f 257px,#e80328 293px,#d8001f 309px)"></i><i style="background:linear-gradient(90deg,#009fff 44px,#0d9dff 52px,#7792ff 92px,#df87ff 124px,#fc84ff 132px,#ff59ba 156px,#ff3986 184px,#ff1d59 224px,#fb0a3b 264px,#de0023 303px)"></i><i style="background:linear-gradient(90deg,#0099ff 43px,#0d97ff 51px,#768cff 91px,#e97fff 127px,#f87dff 131px,#ff78f8 135px,#ff56be 155px,#ff3689 183px,#ff1a5b 223px,#fa073a 267px,#e50028 296px)"></i><i style="background:linear-gradient(90deg,#0094ff 42px,#0d92ff 50px,#7486ff 90px,#e679ff 126px,#ff74fc 134px,#ff52c1 154px,#ff3792 178px,#ff1d65 214px,#fc073f 262px,#ea002d 290px)"></i><i style="background:linear-gradient(90deg,#008fff 41px,#0c8cff 49px,#7280ff 89px,#e273ff 125px,#fe6fff 133px,#ff4fc5 153px,#ff3495 177px,#ff1a67 213px,#fb043e 265px,#f00032 283px)"></i><i style="background:linear-gradient(90deg,#0089ff 40px,#0c87ff 48px,#707aff 88px,#de6dff 124px,#fa69ff 132px,#ff5de9 140px,#ff41b6 160px,#ff2786 188px,#ff105a 228px,#fa013d 268px,#f50037 276px)"></i><i style="background:linear-gradient(90deg,#0084ff 39px,#0c82ff 47px,#7a74ff 91px,#e865ff 127px,#ff60fa 135px,#ff43c2 155px,#ff288e 183px,#ff1060 223px,#fa003f 267px,#f9003c 270px)"></i><i style="background:linear-gradient(90deg,#0080ff 38px,#0c7dff 46px,#786eff 90px,#e55fff 126px,#ff5cfe 134px,#ff3fc6 154px,#ff2591 182px,#ff0e62 222px,#fc0042 263px)"></i><i style="background:linear-gradient(90deg,#007bff 37px,#0c78ff 45px,#7669ff 89px,#e15aff 125px,#fc56ff 133px,#ff37c0 157px,#ff208e 185px,#ff0a60 225px,#fe0048 257px)"></i><i style="background:linear-gradient(90deg,#0076ff 36px,#0c74ff 44px,#7564ff 88px,#de55ff 124px,#f851ff 132px,#ff4df9 136px,#ff34c3 156px,#ff1d90 184px,#ff0862 224px,#ff004e 250px)"></i><i style="background:linear-gradient(90deg,#0072ff 35px,#0c6fff 43px,#735fff 87px,#e74eff 127px,#ff49fd 135px,#ff31c6 155px,#ff1a93 183px,#ff0664 223px,#ff0054 243px)"></i><i style="background:linear-gradient(90deg,#006dff 34px,#0b6bff 42px,#725bff 86px,#e349ff 126px,#fd45ff 134px,#ff2ac1 158px,#ff1590 186px,#ff0263 226px,#ff005a 237px)"></i><i style="background:linear-gradient(90deg,#0069ff 33px,#0b66ff 41px,#7056ff 85px,#e044ff 125px,#f940ff 133px,#ff37ec 141px,#ff20b3 165px,#ff0c82 197px,#ff0060 230px)"></i><i style="background:linear-gradient(90deg,#0065ff 32px,#0b62ff 40px,#7950ff 88px,#e93dff 128px,#ff38fb 136px,#ff24c7 156px,#ff1095 184px,#ff0067 224px)"></i><i style="background:linear-gradient(90deg,#0060ff 31px,#0b5eff 39px,#774bff 87px,#e639ff 127px,#ff34ff 135px,#ff20ca 155px,#ff0d97 183px,#ff006e 217px)"></i><i style="background:linear-gradient(90deg,#005cff 30px,#0b5aff 38px,#7647ff 86px,#e334ff 126px,#fb30ff 134px,#ff21d6 150px,#ff0da0 178px,#ff0076 211px)"></i><i style="background:linear-gradient(90deg,#0058ff 29px,#0b56ff 37px,#7443ff 85px,#df30ff 125px,#f72bff 133px,#ff28fa 137px,#ff17c7 157px,#ff0697 185px,#ff007e 204px)"></i><i style="background:linear-gradient(90deg,#0055ff 28px,#0b52ff 36px,#733fff 84px,#dc2cff 124px,#ff25fe 136px,#ff14ca 156px,#ff0499 184px,#ff0087 197px)"></i><i style="background:linear-gradient(90deg,#0051ff 27px,#0b4eff 35px,#713bff 83px,#e525ff 127px,#fd21ff 135px,#ff0cbd 163px,#ff0090 191px)"></i><i style="background:linear-gradient(90deg,#004dff 26px,#0a4aff 34px,#7037ff 82px,#e221ff 126px,#f91dff 134px,#ff17ee 142px,#ff07b8 166px,#ff009a 184px)"></i><i style="background:linear-gradient(90deg,#004aff 25px,#0a47ff 33px,#7831ff 85px,#ea1bff 129px,#ff16fc 137px,#ff06c3 161px,#ff00a5 178px)"></i><i style="background:linear-gradient(90deg,#0046ff 24px,#0a43ff 32px,#762eff 84px,#e717ff 128px,#fe13ff 136px,#ff03c6 160px,#ff00b1 171px)"></i><i style="background:linear-gradient(90deg,#0043ff 23px,#0a40ff 31px,#752aff 83px,#e414ff 127px,#fb0fff 135px,#ff07e3 147px,#ff00bd 164px)"></i><i style="background:linear-gradient(90deg,#003fff 22px,#0a3cff 30px,#7427ff 82px,#e110ff 126px,#ff09fb 138px,#ff00cb 158px)"></i><i style="background:linear-gradient(90deg,#003cff 21px,#0a39ff 29px,#7223ff 81px,#de0dff 125px,#ff06ff 137px,#ff00da 151px)"></i><i style="background:linear-gradient(90deg,#0039ff 20px,#0a36ff 28px,#7120ff 80px,#db09ff 124px,#fc02ff 136px,#ff00ea 145px)"></i><i style="background:linear-gradient(90deg,#0035ff 19px,#1131ff 31px,#781bff 83px,#e304ff 127px,#ff00fc 138px)"></i><i style="background:linear-gradient(90deg,#0032ff 18px,#112eff 30px,#7717ff 82px,#eb00ff 130px,#f000ff 131px)"></i><i style="background:linear-gradient(90deg,#002fff 17px,#102bff 29px,#7e12ff 85px,#de00ff 125px)"></i><i style="background:linear-gradient(90deg,#002cff 16px,#1028ff 28px,#7d0fff 84px,#cd00ff 118px)"></i><i style="background:linear-gradient(90deg,#0029ff 15px,#1025ff 27px,#7c0cff 83px,#bd00ff 112px)"></i><i style="background:linear-gradient(90deg,#0026ff 14px,#1022ff 26px,#7a09ff 82px,#ae00ff 105px)"></i><i style="background:linear-gradient(90deg,#0024ff 13px,#101fff 25px,#7906ff 81px,#a000ff 99px)"></i><i style="background:linear-gradient(90deg,#0021ff 12px,#101cff 24px,#7803ff 80px,#9200ff 92px)"></i><i style="background:linear-gradient(90deg,#001eff 11px,#1019ff 23px,#7601ff 79px,#8400ff 85px)"></i><i style="background:linear-gradient(90deg,#001bff 10px,#0f17ff 22px,#7700ff 79px)"></i><i style="background:linear-gradient(90deg,#0019ff 9px,#0f14ff 21px,#6b00ff 72px)"></i><i style="background:linear-gradient(90deg,#0016ff 8px,#0f11ff 20px,#5f00ff 66px)"></i><i style="background:linear-gradient(90deg,#0014ff 7px,#0f0fff 19px,#5400ff 59px)"></i><i style="background:linear-gradient(90deg,#0011ff 6px,#150bff 22px,#4900ff 52px)"></i><i style="background:linear-gradient(90deg,#000fff 5px,#1508ff 21px,#3f00ff 46px)"></i><i style="background:linear-gradient(90deg,#000cff 4px,#1506ff 20px,#3500ff 39px)"></i><i style="background:linear-gradient(90deg,#000afe 3px,#1504fe 19px,#2b00fe 33px)"></i><i style="background:linear-gradient(90deg,#0008fd 2px,#1401fd 18px,#2200fd 26px)"></i><i style="background:linear-gradient(90deg,#0005fb 1px,#1800fb 19px)"></i><i style="background:linear-gradient(90deg,#0003f9 0px,#1000f9 13px)"></i><i style="background:linear-gradient(90deg,#0000f7 0px,#0800f7 6px)"></i></div>
<div class="f" style="left:1515.0px;top:47.9px;width:190.6px;height:199.8px;background:#242424;overflow:hidden"><div class="f g4" style="left:0;top:0;width:100%;height:100%;clip-path:polygon(-395.1px 1148.8px,-395.2px 1148.8px,-395.4px 1148.9px,-395.7px 1149.0px,-396.0px 1149.1px,-396.3px 1149.1px,-396.7px 1149.2px,-397.1px 1149.2px,-397.5px 1149.3px,-398.1px 1149.2px,-398.8px 1149.1px,-399.7px 1148.9px,-400.5px 1148.6px,-401.2px 1148.2px,-401.9px 1147.7px,-402.7px 1147.1px,-403.5px 1146.4px,-404.5px 1145.7px,-405.5px 1144.8px,-406.7px 1143.7px,-408.0px 1142.6px,-409.5px 1141.2px,-411.0px 1139.8px,-412.7px 1138.2px,-414.5px 1136.4px,-416.5px 1134.6px,-418.7px 1132.6px,-421.1px 1130.3px,-423.8px 1127.8px,-426.8px 1125.1px,-430.1px 1122.1px,-433.6px 1119.0px,-437.3px 1115.6px,-441.3px 1111.7px,-445.6px 1107.3px,-450.3px 1102.5px,-455.3px 1097.0px,-460.5px 1090.9px,-466.1px 1084.2px,-472.3px 1075.6px,-479.2px 1065.1px,-486.8px 1052.9px,-495.1px 1038.1px,-504.0px 1020.8px,-513.6px 1001.0px,-524.1px 977.2px,-535.4px 949.5px,-547.6px 917.8px,-560.7px 881.0px,-575.1px 838.9px,-590.4px 791.7px,-605.9px 738.4px,-621.4px 678.4px,-637.1px 612.2px,-652.5px 540.6px,-667.8px 462.6px,-682.8px 379.2px,-696.3px 293.8px,-708.3px 206.5px,-718.8px 117.3px,-726.9px 30.2px,-732.5px -54.2px,-735.6px -136.5px,-735.5px -213.9px,-732.1px -286.4px,-725.4px -354.1px,-715.5px -413.9px,-701.8px -465.4px,-684.8px -509.1px,-665.5px -543.5px,-643.8px -567.2px,-619.7px -581.6px,-594.7px -589.2px,-568.8px -589.5px,-541.9px -582.8px,-514.9px -573.3px,-487.8px -561.4px,-460.6px -546.5px,-433.9px -530.7px,-408.0px -514.6px,-382.6px -497.5px,-357.5px -479.8px,-332.8px -461.3px,-308.4px -442.2px,-284.1px -422.5px,-259.9px -402.1px,-235.7px -381.1px,-211.7px -359.6px,-187.8px -337.6px,-163.9px -315.2px,-140.1px -292.5px,-116.3px -269.4px,-92.5px -246.1px,-68.7px -222.4px,-44.8px -198.6px,-20.9px -174.5px,2.9px -150.3px,26.7px -126.0px,50.4px -101.6px,74.1px -77.1px,97.8px -52.7px,121.4px -28.3px,144.9px -3.9px,168.2px 20.3px,191.4px 44.5px,214.3px 68.4px,237.0px 92.1px,259.5px 115.7px,281.7px 138.9px,303.6px 161.7px,325.2px 184.3px,346.3px 206.4px,367.0px 228.0px,387.4px 249.2px,407.1px 269.7px,426.2px 289.8px,444.8px 309.2px,462.5px 327.8px,479.3px 345.4px,495.3px 362.1px,510.7px 378.1px,525.5px 393.6px,539.7px 408.4px,553.1px 422.4px,565.6px 435.4px,577.3px 447.5px,588.3px 458.9px,598.5px 469.6px,608.0px 479.5px,616.9px 488.9px,625.1px 497.5px,632.7px 505.4px,639.7px 512.8px,646.2px 519.6px,652.3px 525.8px,657.9px 531.6px,663.1px 537.1px,667.9px 542.2px,672.5px 546.9px,676.8px 551.5px,680.9px 555.7px,684.7px 559.7px,688.3px 563.5px,691.6px 567.0px,694.7px 570.2px,697.6px 573.2px,700.3px 575.9px,702.7px 578.4px,704.9px 580.7px,706.9px 582.8px,708.7px 584.7px,710.4px 586.4px,711.9px 588.0px,713.3px 589.5px,714.5px 590.8px,715.6px 591.9px,716.7px 593.1px,718.0px 594.5px,719.4px 595.9px,720.7px 597.3px,721.7px 598.3px,722.6px 599.3px,723.5px 600.2px,724.5px 601.2px,725.4px 602.2px,726.1px 602.9px)"><i style="background:linear-gradient(90deg,#499c00 0px,#9c9900 156px,#9b8600 191px)"></i><i style="background:linear-gradient(90deg,#4a9c00 0px,#9c9b00 150px,#9b8500 191px)"></i><i style="background:linear-gradient(90deg,#4b9c00 0px,#9c9a00 150px,#9b8400 191px)"></i><i style="background:linear-gradient(90deg,#4b9c00 0px,#9b9c00 144px,#9b8200 191px)"></i><i style="background:linear-gradient(90deg,#4c9c00 0px,#9c9b00 144px,#9b8100 191px)"></i><i style="background:linear-gradient(90deg,#4d9c00 0px,#9c9900 144px,#9b8000 191px)"></i><i style="background:linear-gradient(90deg,#4e9c01 0px,#9c9b00 138px,#9b7f00 191px)"></i><i style="background:linear-gradient(90deg,#4f9c01 0px,#9c9a00 138px,#9b7e00 191px)"></i><i style="background:linear-gradient(90deg,#509c02 0px,#9c9900 138px,#9b7d00 191px)"></i><i style="background:linear-gradient(90deg,#519c03 0px,#9c9b00 132px,#9b7c00 191px)"></i><i style="background:linear-gradient(90deg,#529c03 0px,#9c9900 132px,#9b7a00 191px)"></i><i style="background:linear-gradient(90deg,#539c04 0px,#9b9c00 126px,#9b7900 191px)"></i><i style="background:linear-gradient(90deg,#549c04 0px,#959c00 114px,#9c9700 132px,#9b7800 191px)"></i><i style="background:linear-gradient(90deg,#549c05 0px,#8f9c00 102px,#9c9900 126px,#9b7700 191px)"></i><i style="background:linear-gradient(90deg,#559c06 0px,#909c00 102px,#9c9700 126px,#9b7600 191px)"></i><i style="background:linear-gradient(90deg,#569c06 0px,#8e9c00 96px,#9c9a00 120px,#9b7500 191px)"></i><i style="background:linear-gradient(90deg,#579c07 0px,#8f9c00 96px,#9c9800 120px,#9b7400 191px)"></i><i style="background:linear-gradient(90deg,#589c08 0px,#919c00 96px,#9c9700 120px,#9b7300 191px)"></i><i style="background:linear-gradient(90deg,#599c08 0px,#969c00 102px,#9c9200 126px,#9b7200 191px)"></i><i style="background:linear-gradient(90deg,#5a9c09 0px,#9c9b00 108px,#9b7000 191px)"></i><i style="background:linear-gradient(90deg,#5b9c09 0px,#9c9a00 108px,#9b6f00 191px)"></i><i style="background:linear-gradient(90deg,#5c9c0a 0px,#9c9800 108px,#9b6e00 191px)"></i><i style="background:linear-gradient(90deg,#5e9c0b 0px,#9c9b00 102px,#9b6d00 191px)"></i><i style="background:linear-gradient(90deg,#5f9c0c 0px,#9c9900 102px,#9b6c00 191px)"></i><i style="background:linear-gradient(90deg,#609c0c 0px,#9b9c00 96px,#9b6d00 186px,#9b6b00 191px)"></i><i style="background:linear-gradient(90deg,#619c0d 0px,#9c9a00 96px,#9c6e00 180px,#9b6a00 191px)"></i><i style="background:linear-gradient(90deg,#629c0e 0px,#9c9901 96px,#9c6d00 180px,#9b6900 191px)"></i><i style="background:linear-gradient(90deg,#639c0e 0px,#9c9b03 90px,#9c6f00 174px,#9b6800 191px)"></i><i style="background:linear-gradient(90deg,#649c0f 0px,#9c9a03 90px,#9c6e00 174px,#9b6700 191px)"></i><i style="background:linear-gradient(90deg,#659c10 0px,#9b9c05 84px,#9c6d00 174px,#9b6600 191px)"></i><i style="background:linear-gradient(90deg,#669c11 0px,#9c9b06 84px,#9c6e00 168px,#9b6500 191px)"></i><i style="background:linear-gradient(90deg,#689c11 0px,#9c9906 84px,#9c6f00 162px,#9b6400 191px)"></i><i style="background:linear-gradient(90deg,#699c12 0px,#9c9b08 78px,#9c6e00 162px,#9b6300 191px)"></i><i style="background:linear-gradient(90deg,#6a9c13 0px,#9c9a09 78px,#9c6d00 162px,#9b6200 191px)"></i><i style="background:linear-gradient(90deg,#6b9c14 0px,#9b9c0a 72px,#9c6c00 162px,#9b6100 191px)"></i><i style="background:linear-gradient(90deg,#6c9c14 0px,#9c9b0b 72px,#9c6d00 156px,#9b6000 191px)"></i><i style="background:linear-gradient(90deg,#6e9c15 0px,#9c990c 72px,#9c6c00 156px,#9b5f00 191px)"></i><i style="background:linear-gradient(90deg,#6f9c16 0px,#9b9c0e 66px,#9c6e01 150px,#9b5e00 191px)"></i><i style="background:linear-gradient(90deg,#709c17 0px,#9c9a0e 66px,#9c6f02 144px,#9b5d00 191px)"></i><i style="background:linear-gradient(90deg,#719c18 0px,#9c990f 66px,#9c6b02 150px,#9b5c00 191px)"></i><i style="background:linear-gradient(90deg,#739c19 0px,#9c9b11 60px,#9c6f04 138px,#9b5b00 191px)"></i><i style="background:linear-gradient(90deg,#749c19 0px,#9c9912 60px,#9c6e04 138px,#9b5a00 191px)"></i><i style="background:linear-gradient(90deg,#759c1a 0px,#9b9c13 54px,#9c6d05 138px,#9b5900 191px)"></i><i style="background:linear-gradient(90deg,#779c1b 0px,#9c9a14 54px,#9c6e06 132px,#9b5800 191px)"></i><i style="background:linear-gradient(90deg,#789c1c 0px,#9c9915 54px,#9c6d07 132px,#9b5700 191px)"></i><i style="background:linear-gradient(90deg,#7a9c1d 0px,#9c9b17 48px,#9c6f08 126px,#9b5600 191px)"></i><i style="background:linear-gradient(90deg,#7b9c1e 0px,#9c9a18 48px,#9c6d09 126px,#9b5501 191px)"></i><i style="background:linear-gradient(90deg,#7c9c1f 0px,#9b9c1a 42px,#9c6c09 126px,#9b5401 191px)"></i><i style="background:linear-gradient(90deg,#7e9c20 0px,#9c9b1a 42px,#9c6e0b 120px,#9b5402 191px)"></i><i style="background:linear-gradient(90deg,#7f9c21 0px,#9c991b 42px,#9c6d0b 120px,#9b5302 191px)"></i></div><div class="f g4" style="left:0;top:0;width:100%;height:100%;clip-path:polygon(536.7px 467.3px,-143.3px -98.9px,-443.3px 1033.4px)"><i style="background:linear-gradient(90deg,#78ff00 0px,#ebff00 132px,#fdff00 150px,#ffdc00 191px)"></i><i style="background:linear-gradient(90deg,#79ff00 0px,#e8ff00 126px,#fffe00 150px,#ffda00 191px)"></i><i style="background:linear-gradient(90deg,#7aff00 0px,#eaff00 126px,#fffc00 150px,#ffd800 191px)"></i><i style="background:linear-gradient(90deg,#7cff00 0px,#ecff00 126px,#feff00 144px,#ffd600 191px)"></i><i style="background:linear-gradient(90deg,#7dff00 0px,#eeff00 126px,#fffd00 144px,#ffd400 191px)"></i><i style="background:linear-gradient(90deg,#7fff00 0px,#f1ff00 126px,#fffb00 144px,#ffd200 191px)"></i><i style="background:linear-gradient(90deg,#80ff01 0px,#f3ff00 126px,#ffff00 138px,#ffd000 191px)"></i><i style="background:linear-gradient(90deg,#81ff02 0px,#f5ff00 126px,#fffd00 138px,#ffce00 191px)"></i><i style="background:linear-gradient(90deg,#83ff03 0px,#f1ff00 120px,#feff00 132px,#ffcc00 191px)"></i><i style="background:linear-gradient(90deg,#84ff04 0px,#d0ff00 84px,#fffe00 132px,#ffca00 191px)"></i><i style="background:linear-gradient(90deg,#86ff05 0px,#c1ff00 66px,#fcff00 126px,#ffc900 191px)"></i><i style="background:linear-gradient(90deg,#87ff06 0px,#bdff00 60px,#ffff00 126px,#ffc700 191px)"></i><i style="background:linear-gradient(90deg,#89ff07 0px,#bfff00 60px,#fffd00 126px,#ffc500 191px)"></i><i style="background:linear-gradient(90deg,#8aff08 0px,#c7ff00 66px,#fdff00 120px,#ffc300 191px)"></i><i style="background:linear-gradient(90deg,#8cff09 0px,#c9ff00 66px,#fffe00 120px,#ffc100 191px)"></i><i style="background:linear-gradient(90deg,#8eff0a 0px,#d1ff00 72px,#fffc00 120px,#ffbf00 191px)"></i><i style="background:linear-gradient(90deg,#8fff0b 0px,#d3ff00 72px,#feff00 114px,#ffc100 186px,#ffbe00 191px)"></i><i style="background:linear-gradient(90deg,#91ff0c 0px,#dbff00 78px,#fffd00 114px,#ffc400 180px,#ffbc00 191px)"></i><i style="background:linear-gradient(90deg,#93ff0d 0px,#e3ff00 84px,#fdff00 108px,#ffba00 191px)"></i><i style="background:linear-gradient(90deg,#94ff0e 0px,#e6ff00 84px,#ffff00 108px,#ffc400 174px,#ffb800 191px)"></i><i style="background:linear-gradient(90deg,#96ff10 0px,#eeff00 90px,#fffc00 108px,#ffc200 174px,#ffb700 191px)"></i><i style="background:linear-gradient(90deg,#98ff11 0px,#f7ff00 96px,#fffa00 108px,#ffc000 174px,#ffb500 191px)"></i><i style="background:linear-gradient(90deg,#99ff12 0px,#faff00 96px,#fff700 108px,#ffbf00 174px,#ffb300 191px)"></i><i style="background:linear-gradient(90deg,#9bff13 0px,#fcff00 96px,#ffbd00 174px,#ffb100 191px)"></i><i style="background:linear-gradient(90deg,#9dff14 0px,#ffff00 96px,#ffc400 162px,#ffb000 191px)"></i><i style="background:linear-gradient(90deg,#9fff15 0px,#fffd00 96px,#ffc600 156px,#ffae00 191px)"></i><i style="background:linear-gradient(90deg,#a0ff16 0px,#fdff03 90px,#ffc000 162px,#ffac00 191px)"></i><i style="background:linear-gradient(90deg,#a2ff18 0px,#fffe04 90px,#ffc700 150px,#ffab00 191px)"></i><i style="background:linear-gradient(90deg,#a4ff19 0px,#fffc05 90px,#ffc900 144px,#ffa900 191px)"></i><i style="background:linear-gradient(90deg,#a6ff1a 0px,#feff08 84px,#ffcc00 138px,#ffa700 191px)"></i><i style="background:linear-gradient(90deg,#a8ff1b 0px,#fffd09 84px,#ffca00 138px,#ffa600 191px)"></i><i style="background:linear-gradient(90deg,#aaff1c 0px,#fcff0c 78px,#ffc800 138px,#ffa400 191px)"></i><i style="background:linear-gradient(90deg,#acff1e 0px,#ffff0d 78px,#ffc600 138px,#ffa200 191px)"></i><i style="background:linear-gradient(90deg,#aeff1f 0px,#fffc0e 78px,#ffc400 138px,#ffa100 191px)"></i><i style="background:linear-gradient(90deg,#b0ff20 0px,#feff11 72px,#ffc201 138px,#ff9f00 191px)"></i><i style="background:linear-gradient(90deg,#b2ff22 0px,#fffe12 72px,#ffc503 132px,#ff9d00 191px)"></i><i style="background:linear-gradient(90deg,#b4ff23 0px,#fcff15 66px,#ffba01 144px,#ff9c00 191px)"></i><i style="background:linear-gradient(90deg,#b6ff24 0px,#ffff16 66px,#ffc506 126px,#ffa000 180px,#ff9a00 191px)"></i><i style="background:linear-gradient(90deg,#b8ff26 0px,#fffd17 66px,#ffc307 126px,#ff9b00 186px,#ff9800 191px)"></i><i style="background:linear-gradient(90deg,#baff27 0px,#fdff1a 60px,#ffbd07 132px,#ff9700 191px)"></i><i style="background:linear-gradient(90deg,#bcff28 0px,#fffe1c 60px,#ffc40a 120px,#ff9500 191px)"></i><i style="background:linear-gradient(90deg,#beff2a 0px,#fbff1e 54px,#ffe215 84px,#ffac05 150px,#ff9400 191px)"></i><i style="background:linear-gradient(90deg,#c1ff2b 0px,#feff20 54px,#ffc00c 120px,#ff9200 191px)"></i><i style="background:linear-gradient(90deg,#c3ff2d 0px,#fffd21 54px,#ffc30f 114px,#ff9100 191px)"></i><i style="background:linear-gradient(90deg,#c5ff2e 0px,#fcff24 48px,#ffbc0e 120px,#ff8f00 191px)"></i><i style="background:linear-gradient(90deg,#c7ff30 0px,#ffff26 48px,#ffc814 102px,#ff9302 180px,#ff8e01 191px)"></i><i style="background:linear-gradient(90deg,#caff31 0px,#fffc27 48px,#ffc113 108px,#ff8c01 191px)"></i><i style="background:linear-gradient(90deg,#ccff33 0px,#fdff2a 42px,#ffbf14 108px,#ff8b02 191px)"></i><i style="background:linear-gradient(90deg,#ceff34 0px,#fffe2b 42px,#ffc718 96px,#ff9206 174px,#ff8903 191px)"></i><i style="background:linear-gradient(90deg,#d1ff36 0px,#fcff2e 36px,#ffc519 96px,#ff9007 174px,#ff8704 191px)"></i></div></div>
<svg width="1717" height="887" viewBox="0 0 1717 887">
<rect x="1329.75" y="374.75" width="14.50" height="14.50" fill="none" stroke="#ffffff" stroke-width="1.5"/>
<rect x="1382.75" y="373.75" width="14.50" height="14.50" fill="none" stroke="#ffffff" stroke-width="1.5"/>
<rect x="1430.75" y="373.75" width="14.50" height="14.50" fill="none" stroke="#ffffff" stroke-width="1.5"/>
<rect x="1480.75" y="373.75" width="14.50" height="14.50" fill="none" stroke="#ffffff" stroke-width="1.5"/>
<rect x="1538.75" y="373.75" width="14.50" height="14.50" fill="none" stroke="#ffffff" stroke-width="1.5"/>
<rect x="1275.75" y="338.75" width="14.50" height="14.50" fill="none" stroke="#ffffff" stroke-width="1.5"/>
<rect x="1274.75" y="303.75" width="14.50" height="14.50" fill="none" stroke="#ffffff" stroke-width="1.5"/>
<rect x="1271.75" y="269.75" width="14.50" height="14.50" fill="none" stroke="#ffffff" stroke-width="1.5"/>
<rect x="1270.75" y="236.75" width="14.50" height="14.50" fill="none" stroke="#ffffff" stroke-width="1.5"/>
<rect x="1266.75" y="197.75" width="14.50" height="14.50" fill="none" stroke="#ffffff" stroke-width="1.5"/>
<rect x="1251.75" y="410.75" width="14.50" height="14.50" fill="none" stroke="#ffffff" stroke-width="1.5"/>
<rect x="1226.75" y="444.75" width="14.50" height="14.50" fill="none" stroke="#ffffff" stroke-width="1.5"/>
<rect x="1201.75" y="478.75" width="14.50" height="14.50" fill="none" stroke="#ffffff" stroke-width="1.5"/>
<rect x="1176.75" y="512.75" width="14.50" height="14.50" fill="none" stroke="#ffffff" stroke-width="1.5"/>
<rect x="1148.75" y="551.75" width="14.50" height="14.50" fill="none" stroke="#ffffff" stroke-width="1.5"/>
<rect x="1264.75" y="374.75" width="14.50" height="14.50" fill="none" stroke="#ffffff" stroke-width="1.5"/>
<rect x="1250.75" y="374.75" width="14.50" height="14.50" fill="none" stroke="#ffffff" stroke-width="1.5"/>
<rect x="1236.75" y="374.75" width="14.50" height="14.50" fill="none" stroke="#ffffff" stroke-width="1.5"/>
<rect x="1222.75" y="374.75" width="14.50" height="14.50" fill="none" stroke="#ffffff" stroke-width="1.5"/>
<rect x="1208.75" y="374.75" width="14.50" height="14.50" fill="none" stroke="#ffffff" stroke-width="1.5"/>
<rect x="1280.75" y="397.75" width="14.50" height="14.50" fill="none" stroke="#ffffff" stroke-width="1.5"/>
<rect x="1281.75" y="420.75" width="14.50" height="14.50" fill="none" stroke="#ffffff" stroke-width="1.5"/>
<rect x="1281.75" y="441.75" width="14.50" height="14.50" fill="none" stroke="#ffffff" stroke-width="1.5"/>
<rect x="1283.75" y="465.75" width="14.50" height="14.50" fill="none" stroke="#ffffff" stroke-width="1.5"/>
<rect x="1284.75" y="488.75" width="14.50" height="14.50" fill="none" stroke="#ffffff" stroke-width="1.5"/>
<rect x="1295.75" y="351.75" width="14.50" height="14.50" fill="none" stroke="#ffffff" stroke-width="1.5"/>
<rect x="1313.75" y="327.75" width="14.50" height="14.50" fill="none" stroke="#ffffff" stroke-width="1.5"/>
<rect x="1329.75" y="304.75" width="14.50" height="14.50" fill="none" stroke="#ffffff" stroke-width="1.5"/>
<rect x="1345.75" y="283.75" width="14.50" height="14.50" fill="none" stroke="#ffffff" stroke-width="1.5"/>
<rect x="1363.75" y="259.75" width="14.50" height="14.50" fill="none" stroke="#ffffff" stroke-width="1.5"/>
<circle cx="1342.3" cy="386.8" r="4.45" fill="#b09797" stroke="#000" stroke-width="1.1"/>
<circle cx="1409.6" cy="382.3" r="4.45" fill="#b67878" stroke="#000" stroke-width="1.1"/>
<circle cx="1459.0" cy="381.0" r="4.45" fill="#bd5353" stroke="#000" stroke-width="1.1"/>
<circle cx="1513.3" cy="374.0" r="4.45" fill="#c52b2b" stroke="#000" stroke-width="1.1"/>
<circle cx="1542.1" cy="372.3" r="4.45" fill="#cd0000" stroke="#000" stroke-width="1.1"/>
<circle cx="1277.9" cy="338.1" r="4.45" fill="#97ab97" stroke="#000" stroke-width="1.1"/>
<circle cx="1277.9" cy="290.5" r="4.45" fill="#78aa78" stroke="#000" stroke-width="1.1"/>
<circle cx="1281.7" cy="241.8" r="4.45" fill="#53a853" stroke="#000" stroke-width="1.1"/>
<circle cx="1283.0" cy="204.9" r="4.45" fill="#2ba72b" stroke="#000" stroke-width="1.1"/>
<circle cx="1285.1" cy="188.0" r="4.45" fill="#00a500" stroke="#000" stroke-width="1.1"/>
<circle cx="1247.0" cy="434.6" r="4.45" fill="#9797a9" stroke="#000" stroke-width="1.1"/>
<circle cx="1214.8" cy="482.1" r="4.45" fill="#7878a5" stroke="#000" stroke-width="1.1"/>
<circle cx="1189.8" cy="520.2" r="4.45" fill="#5353a1" stroke="#000" stroke-width="1.1"/>
<circle cx="1169.9" cy="548.5" r="4.45" fill="#2b2b9c" stroke="#000" stroke-width="1.1"/>
<circle cx="1159.8" cy="565.9" r="4.45" fill="#000096" stroke="#000" stroke-width="1.1"/>
<circle cx="1264.9" cy="384.0" r="4.45" fill="#97aeae" stroke="#000" stroke-width="1.1"/>
<circle cx="1249.9" cy="382.5" r="4.45" fill="#78b0b0" stroke="#000" stroke-width="1.1"/>
<circle cx="1236.9" cy="380.9" r="4.45" fill="#53b3b3" stroke="#000" stroke-width="1.1"/>
<circle cx="1226.4" cy="384.0" r="4.45" fill="#2bb6b6" stroke="#000" stroke-width="1.1"/>
<circle cx="1220.1" cy="384.0" r="4.45" fill="#00b9b9" stroke="#000" stroke-width="1.1"/>
<circle cx="1283.4" cy="414.7" r="4.45" fill="#b097ae" stroke="#000" stroke-width="1.1"/>
<circle cx="1280.9" cy="447.3" r="4.45" fill="#b678b0" stroke="#000" stroke-width="1.1"/>
<circle cx="1276.2" cy="472.8" r="4.45" fill="#bd53b3" stroke="#000" stroke-width="1.1"/>
<circle cx="1266.9" cy="497.7" r="4.45" fill="#c52bb6" stroke="#000" stroke-width="1.1"/>
<circle cx="1231.8" cy="529.1" r="4.45" fill="#cd00b9" stroke="#000" stroke-width="1.1"/>
<circle cx="1302.2" cy="354.7" r="4.45" fill="#b0ae97" stroke="#000" stroke-width="1.1"/>
<circle cx="1322.9" cy="322.5" r="4.45" fill="#b6b178" stroke="#000" stroke-width="1.1"/>
<circle cx="1345.7" cy="285.4" r="4.45" fill="#bdb553" stroke="#000" stroke-width="1.1"/>
<circle cx="1356.1" cy="265.6" r="4.45" fill="#c5b92b" stroke="#000" stroke-width="1.1"/>
<circle cx="1357.4" cy="238.9" r="4.45" fill="#cdbe00" stroke="#000" stroke-width="1.1"/>
<rect x="1280.10" y="376.10" width="12.60" height="12.60" fill="none" stroke="#000" stroke-width="2.2"/>
<circle cx="1282.0" cy="391.4" r="4.45" fill="#ffffff" stroke="#000" stroke-width="1.1"/>
<rect x="1603.75" y="140.75" width="13.80" height="13.80" fill="none" stroke="#ffffff" stroke-width="1.5"/>
<rect x="1558.75" y="218.75" width="13.80" height="13.80" fill="none" stroke="#ffffff" stroke-width="1.5"/>
<circle cx="1576.9" cy="58.8" r="4.1" fill="#cdbe00" stroke="#000" stroke-width="1.1"/>
<circle cx="1573.7" cy="144.0" r="4.1" fill="#b8b04a" stroke="#000" stroke-width="1.1"/>
<circle cx="1547.5" cy="207.5" r="4.1" fill="#b0ac70" stroke="#000" stroke-width="1.1"/>
<line x1="1515.00" y1="47.90" x2="1515.00" y2="248.70" stroke="#a0a0a0" stroke-width="1.6"/>
<line x1="1514.20" y1="248.30" x2="1705.60" y2="248.30" stroke="#a0a0a0" stroke-width="1.6"/>
<line x1="1037.70" y1="47.90" x2="1705.60" y2="47.90" stroke="#969696" stroke-width="1.6"/>
<line x1="1037.70" y1="47.90" x2="1037.70" y2="598.30" stroke="#969696" stroke-width="1.6"/>
<line x1="1705.60" y1="47.90" x2="1705.60" y2="598.30" stroke="#969696" stroke-width="1.6"/>
<line x1="1037.70" y1="598.30" x2="1705.60" y2="598.30" stroke="#969696" stroke-width="1.6"/>
</svg>
</body></html>
